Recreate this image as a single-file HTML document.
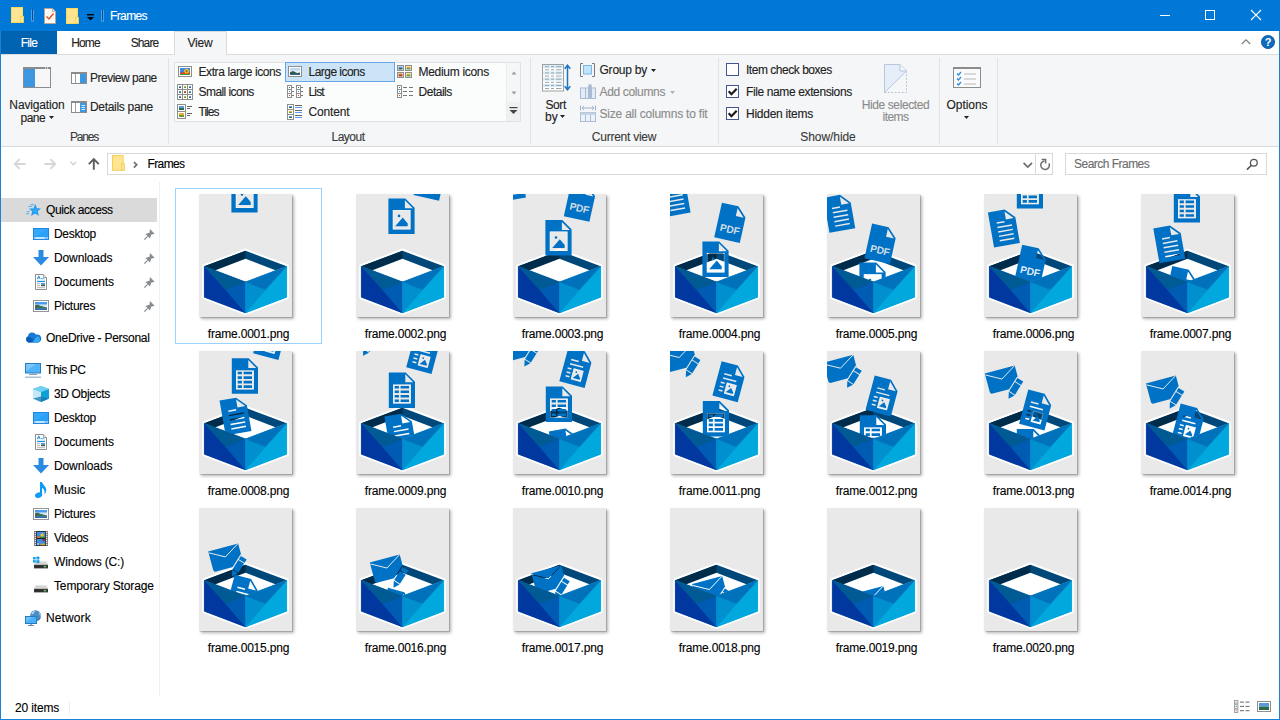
<!DOCTYPE html>
<html lang="en"><head><meta charset="utf-8"><title>Frames</title>
<style>
*{box-sizing:border-box;margin:0;padding:0}
html,body{width:1280px;height:720px;overflow:hidden;background:#fff}
body{font-family:"Liberation Sans",sans-serif;font-size:12px;color:#000;position:relative}
.a{position:absolute}
.t{position:absolute;white-space:nowrap;line-height:16px;height:16px;font-size:12px;color:#000;-webkit-text-stroke:.12px}
.tc{transform:translateX(-50%)}
.g{color:#8b8b8b}
.w{color:#fff}
svg{position:absolute;overflow:visible}
.lbl{color:#3a3a3a}
</style></head>
<body>
<div class="a" style="left:0px;top:55px;width:1280px;height:92px;background:#f5f6f7;"></div>
<div class="a" style="left:0px;top:0px;width:1280px;height:31px;background:#0078d7;"></div><svg style="left:11px;top:7px" width="13" height="16" viewBox="0 0 13 16"><rect x="0.5" y="0.5" width="11" height="15" fill="#ffe591" stroke="#fbd75c"/><rect x="9.8" y="9.4" width="2.7" height="6.1" fill="#ffeaa6" stroke="#f6cf50" stroke-width="0.9"/></svg><svg style="left:31px;top:9px" width="3" height="13" viewBox="0 0 3 13"><rect x="0" y="0.3" width="3" height="12.7" rx="1.2" fill="#4a9fe6"/><rect x="1" y="0" width="1" height="11.6" fill="#0b4d90"/></svg><svg style="left:44px;top:8px" width="12" height="16" viewBox="0 0 12 16"><path d="M0.5 0.5H8.5L11.5 3.5V15.5H0.5Z" fill="#fafafa" stroke="#b9a392" stroke-width="1"/><path d="M8.5 0.5V3.5H11.5" fill="#e4e4e4" stroke="#b9a392" stroke-width="0.8"/><path d="M2.5 8.5L5 11L9.5 5.5" fill="none" stroke="#e8541e" stroke-width="1.5"/></svg><svg style="left:66px;top:8px" width="13" height="16" viewBox="0 0 13 16"><rect x="0.5" y="0.5" width="11" height="15" fill="#ffe591" stroke="#fbd75c"/><rect x="9.8" y="9.4" width="2.7" height="6.1" fill="#ffeaa6" stroke="#f6cf50" stroke-width="0.9"/></svg><svg style="left:87px;top:14px" width="8" height="7" viewBox="0 0 8 7"><rect x="0" y="0" width="7" height="1.4" fill="#000"/><path d="M0 3H7L3.5 6.6Z" fill="#000"/></svg><svg style="left:101px;top:9px" width="3" height="13" viewBox="0 0 3 13"><rect x="0" y="0.3" width="3" height="12.7" rx="1.2" fill="#4a9fe6"/><rect x="1" y="0" width="1" height="11.6" fill="#0b4d90"/></svg><div class="t w" style="left:110px;top:8px;letter-spacing:-0.614px;">Frames</div><div class="a" style="left:1160px;top:15px;width:10px;height:1px;background:#fff;"></div><div class="a" style="left:1205px;top:10px;width:10px;height:10px;border:1px solid #fff;"></div><svg style="left:1251px;top:10px" width="10" height="10" viewBox="0 0 10 10"><path d="M0 0L10 10M10 0L0 10" stroke="#fff" stroke-width="1.1" fill="none"/></svg>
<div class="a" style="left:0px;top:31px;width:1280px;height:24px;background:#fff;"></div><div class="a" style="left:0px;top:54px;width:1280px;height:1px;background:#dadbdc;"></div><div class="a" style="left:1px;top:31px;width:56px;height:23px;background:#0063b1;"></div><div class="t tc w" style="left:29px;top:35px;letter-spacing:-0.648px;">File</div><div class="t tc " style="left:85.5px;top:35px;letter-spacing:-0.855px;color:#222;">Home</div><div class="t tc " style="left:144.5px;top:35px;letter-spacing:-0.883px;color:#222;">Share</div><div class="a" style="left:174px;top:31px;width:53px;height:24px;background:#f5f6f7;border:1px solid #dadbdc;border-bottom:none"></div><div class="t tc " style="left:200px;top:35px;letter-spacing:-0.199px;color:#222;">View</div><svg style="left:1241px;top:38px" width="10" height="7" viewBox="0 0 10 7"><path d="M0.8 6L5 1.8L9.2 6" stroke="#7a7a7a" stroke-width="1.1" fill="none"/></svg><svg style="left:1261px;top:35px" width="14" height="14" viewBox="0 0 14 14"><circle cx="7" cy="7" r="6.6" fill="#0f6cbd" stroke="#0a559c" stroke-width=".8"/><text x="7" y="11" font-size="11" font-weight="bold" fill="#fff" text-anchor="middle" font-family="Liberation Sans, sans-serif">?</text></svg>
<svg style="left:23px;top:67px" width="28" height="21" viewBox="0 0 28 21"><rect x="0.5" y="1" width="27" height="19.5" fill="#f7f7f7" stroke="#8c8c8c" stroke-width="1"/><rect x="0" y="0" width="28" height="2" fill="#8c8c8c"/><rect x="1" y="2" width="11" height="18" fill="#3c96e0"/><rect x="22" y="0.5" width="1" height="1" fill="#fff"/><rect x="24" y="0.5" width="1" height="1" fill="#fff"/></svg><div class="t tc " style="left:37px;top:96.5px;letter-spacing:-0.145px;color:#222;">Navigation</div><div class="t " style="left:20.5px;top:109.5px;letter-spacing:-0.501px;color:#222;">pane</div><svg style="left:49px;top:116px" width="6" height="4" viewBox="0 0 6 4"><path d="M0 0H5L2.5 3Z" fill="#222"/></svg><svg style="left:71px;top:72px" width="16" height="12" viewBox="0 0 16 12"><rect x="0.5" y="1" width="15" height="10.5" fill="#fff" stroke="#8c8c8c"/><rect x="0" y="0" width="16" height="2" fill="#8c8c8c"/><rect x="4" y="2" width="1" height="9" fill="#a0a0a0"/><rect x="9" y="2" width="6" height="9" fill="#3c96e0"/></svg><div class="t " style="left:90px;top:70px;letter-spacing:-0.493px;color:#222;">Preview pane</div><svg style="left:71px;top:101px" width="16" height="12" viewBox="0 0 16 12"><rect x="0.5" y="1" width="15" height="10.5" fill="#fff" stroke="#8c8c8c"/><rect x="0" y="0" width="16" height="2" fill="#8c8c8c"/><rect x="4" y="2" width="1" height="9" fill="#a0a0a0"/><rect x="9" y="2" width="6" height="9" fill="#3c96e0"/><rect x="10.5" y="4" width="3.5" height="1" fill="#dbeeff"/><rect x="10.5" y="6" width="3.5" height="1" fill="#dbeeff"/><rect x="10.5" y="8" width="3.5" height="1" fill="#dbeeff"/></svg><div class="t " style="left:90px;top:99px;letter-spacing:-0.311px;color:#222;">Details pane</div><div class="t tc lbl" style="left:84px;top:129px;letter-spacing:-1.208px;">Panes</div><div class="a" style="left:168px;top:58px;width:1px;height:86px;background:#e2e3e4;"></div>
<div class="a" style="left:174px;top:62px;width:347px;height:60px;background:#fbfcfc;border:1px solid #e1e2e3;"></div><div class="a" style="left:506px;top:63px;width:14px;height:58px;background:#f5f6f7;border-left:1px solid #eceded"></div><div class="a" style="left:507px;top:102px;width:13px;height:19px;background:#eff0f1;"></div><svg style="left:511px;top:70.5px" width="6" height="4" viewBox="0 0 6 4"><path d="M0.5 3.6L3 0.6L5.5 3.6Z" fill="#8fa0ad"/></svg><svg style="left:511px;top:91px" width="6" height="4" viewBox="0 0 6 4"><path d="M0.5 0.4L3 3.4L5.5 0.4Z" fill="#8fa0ad"/></svg><svg style="left:509px;top:107px" width="9" height="8" viewBox="0 0 9 8"><rect x="0.5" y="0" width="8" height="1.2" fill="#444"/><path d="M0.5 3H8.5L4.5 7Z" fill="#444"/></svg><div class="a" style="left:285px;top:62px;width:110px;height:20px;background:#cce4f7;border:1px solid #66a7e8;"></div><svg style="left:178px;top:66px" width="14" height="11" viewBox="0 0 14 11"><rect x="0.5" y="0.5" width="13" height="10" fill="#fff" stroke="#8e8e8e"/><rect x="2" y="2" width="10" height="4" fill="#3d8be6"/><rect x="2" y="6" width="10" height="2" fill="#e04a20"/><rect x="2" y="8" width="10" height="1" fill="#3a9a3a"/><circle cx="8.6" cy="5.2" r="2.4" fill="#f2c028"/><circle cx="8.6" cy="5.2" r="1" fill="#8a5a18"/><rect x="3" y="5" width="2" height="2" fill="#4a6ae0"/></svg><div class="t " style="left:198.5px;top:64px;letter-spacing:-0.411px;color:#222;">Extra large icons</div><svg style="left:288px;top:66px" width="14" height="11" viewBox="0 0 14 11"><rect x="0.5" y="0.5" width="13" height="10" fill="#fff" stroke="#8e8e8e"/><rect x="2" y="2" width="10" height="3" fill="#bcd8f0"/><rect x="2" y="4.5" width="10" height="2" fill="#e6eef4"/><path d="M2 9V6.2L5 5L9 7L12 6.4V9Z" fill="#2d5a50"/><rect x="2" y="8" width="10" height="1" fill="#3a6a8a"/></svg><div class="t " style="left:308.5px;top:64px;letter-spacing:-0.535px;color:#222;">Large icons</div><svg style="left:397px;top:65px" width="15" height="13" viewBox="0 0 15 13"><rect x="0.5" y="0.5" width="6" height="5" fill="#fff" stroke="#8e8e8e"/><rect x="1.5" y="1.5" width="4" height="1.5" fill="#5a9ce8"/><rect x="1.5" y="3.0" width="4" height="1.5" fill="#2e6a52"/><rect x="8.5" y="0.5" width="6" height="5" fill="#fff" stroke="#8e8e8e"/><rect x="9.5" y="1.5" width="4" height="1.5" fill="#e8b030"/><rect x="9.5" y="3.0" width="4" height="1.5" fill="#6a9a40"/><rect x="0.5" y="7.5" width="6" height="5" fill="#fff" stroke="#8e8e8e"/><rect x="1.5" y="8.5" width="4" height="1.5" fill="#d06a20"/><rect x="1.5" y="10.0" width="4" height="1.5" fill="#b04818"/><rect x="8.5" y="7.5" width="6" height="5" fill="#fff" stroke="#8e8e8e"/><rect x="9.5" y="8.5" width="4" height="1.5" fill="#e8b030"/><rect x="9.5" y="10.0" width="4" height="1.5" fill="#6a9a40"/></svg><div class="t " style="left:418.5px;top:64px;letter-spacing:-0.303px;color:#222;">Medium icons</div><svg style="left:177px;top:84px" width="16" height="16" viewBox="0 0 16 16"><rect x="0.5" y="0.5" width="5" height="5" fill="#fff" stroke="#8e8e8e"/><rect x="2" y="2" width="2" height="1.0" fill="#5a9ce8"/><rect x="2" y="3.0" width="2" height="1.0" fill="#2e6a52"/><rect x="5.5" y="0.5" width="5" height="5" fill="#fff" stroke="#8e8e8e"/><rect x="7" y="2" width="2" height="1.0" fill="#e8b030"/><rect x="7" y="3.0" width="2" height="1.0" fill="#6a9a40"/><rect x="10.5" y="0.5" width="5" height="5" fill="#fff" stroke="#8e8e8e"/><rect x="12" y="2" width="2" height="1.0" fill="#5a9ce8"/><rect x="12" y="3.0" width="2" height="1.0" fill="#3a7a5a"/><rect x="0.5" y="5.5" width="5" height="5" fill="#fff" stroke="#8e8e8e"/><rect x="2" y="7" width="2" height="1.0" fill="#5a9ce8"/><rect x="2" y="8.0" width="2" height="1.0" fill="#3a7a5a"/><rect x="5.5" y="5.5" width="5" height="5" fill="#fff" stroke="#8e8e8e"/><rect x="7" y="7" width="2" height="1.0" fill="#d06a20"/><rect x="7" y="8.0" width="2" height="1.0" fill="#b04818"/><rect x="10.5" y="5.5" width="5" height="5" fill="#fff" stroke="#8e8e8e"/><rect x="12" y="7" width="2" height="1.0" fill="#5a9ce8"/><rect x="12" y="8.0" width="2" height="1.0" fill="#2e6a52"/><rect x="0.5" y="10.5" width="5" height="5" fill="#fff" stroke="#8e8e8e"/><rect x="2" y="12" width="2" height="1.0" fill="#5a9ce8"/><rect x="2" y="13.0" width="2" height="1.0" fill="#2e6a52"/><rect x="5.5" y="10.5" width="5" height="5" fill="#fff" stroke="#8e8e8e"/><rect x="7" y="12" width="2" height="1.0" fill="#e8b030"/><rect x="7" y="13.0" width="2" height="1.0" fill="#6a9a40"/><rect x="10.5" y="10.5" width="5" height="5" fill="#fff" stroke="#8e8e8e"/><rect x="12" y="12" width="2" height="1.0" fill="#5a9ce8"/><rect x="12" y="13.0" width="2" height="1.0" fill="#3a7a5a"/></svg><div class="t " style="left:198.5px;top:84px;letter-spacing:-0.556px;color:#222;">Small icons</div><svg style="left:287px;top:85px" width="16" height="13" viewBox="0 0 16 13"><rect x="0.5" y="0.5" width="4" height="4" fill="#fff" stroke="#8e8e8e"/><rect x="0.5" y="4.5" width="4" height="4" fill="#fff" stroke="#8e8e8e"/><rect x="0.5" y="8.5" width="4" height="4" fill="#fff" stroke="#8e8e8e"/><rect x="2" y="2" width="1" height="1" fill="#3a7a5a"/><rect x="5" y="2" width="2" height="1" fill="#777"/><rect x="2" y="6" width="1" height="1" fill="#4a8cf0"/><rect x="5" y="6" width="2" height="1" fill="#777"/><rect x="2" y="10" width="1" height="1" fill="#e05020"/><rect x="5" y="10" width="2" height="1" fill="#777"/><rect x="9.5" y="0.5" width="4" height="4" fill="#fff" stroke="#8e8e8e"/><rect x="9.5" y="4.5" width="4" height="4" fill="#fff" stroke="#8e8e8e"/><rect x="9.5" y="8.5" width="4" height="4" fill="#fff" stroke="#8e8e8e"/><rect x="11" y="2" width="1" height="1" fill="#3a7a5a"/><rect x="14" y="2" width="2" height="1" fill="#777"/><rect x="11" y="6" width="1" height="1" fill="#4a8cf0"/><rect x="14" y="6" width="2" height="1" fill="#777"/><rect x="11" y="10" width="1" height="1" fill="#e05020"/><rect x="14" y="10" width="2" height="1" fill="#777"/></svg><div class="t " style="left:308.5px;top:84px;letter-spacing:-0.829px;color:#222;">List</div><svg style="left:397px;top:85px" width="16" height="13" viewBox="0 0 16 13"><rect x="0.5" y="0.5" width="4" height="4" fill="#fff" stroke="#8e8e8e"/><rect x="0.5" y="4.5" width="4" height="4" fill="#fff" stroke="#8e8e8e"/><rect x="0.5" y="8.5" width="4" height="4" fill="#fff" stroke="#8e8e8e"/><rect x="2" y="2" width="1" height="1" fill="#3a7a5a"/><rect x="6" y="2" width="4" height="1" fill="#777"/><rect x="12" y="2" width="4" height="1" fill="#777"/><rect x="2" y="6" width="1" height="1" fill="#4a8cf0"/><rect x="6" y="6" width="4" height="1" fill="#777"/><rect x="12" y="6" width="4" height="1" fill="#777"/><rect x="2" y="10" width="1" height="1" fill="#e05020"/><rect x="6" y="10" width="4" height="1" fill="#777"/><rect x="12" y="10" width="4" height="1" fill="#777"/></svg><div class="t " style="left:418.5px;top:84px;letter-spacing:-0.481px;color:#222;">Details</div><svg style="left:177px;top:104px" width="16" height="15" viewBox="0 0 16 15"><rect x="0.5" y="0.5" width="8" height="7" fill="#fff" stroke="#8e8e8e"/><rect x="0.5" y="7.5" width="8" height="7" fill="#fff" stroke="#8e8e8e"/><rect x="2" y="2" width="5" height="2.0" fill="#5a9ce8"/><rect x="2" y="4.0" width="5" height="2.0" fill="#2e6a52"/><rect x="2" y="9" width="5" height="2.0" fill="#e8b030"/><rect x="2" y="11.0" width="5" height="2.0" fill="#6a9a40"/><rect x="10" y="2" width="5" height="1" fill="#666"/><rect x="10" y="4" width="3" height="1" fill="#666"/><rect x="10" y="9" width="5" height="1" fill="#666"/><rect x="10" y="11" width="3" height="1" fill="#666"/></svg><div class="t " style="left:198.5px;top:104px;letter-spacing:-0.998px;color:#222;">Tiles</div><svg style="left:287px;top:104px" width="16" height="16" viewBox="0 0 16 16"><rect x="0.5" y="0.5" width="6" height="5" fill="#fff" stroke="#8e8e8e"/><rect x="0.5" y="5.5" width="6" height="5" fill="#fff" stroke="#8e8e8e"/><rect x="0.5" y="10.5" width="6" height="5" fill="#fff" stroke="#8e8e8e"/><rect x="2" y="2" width="3" height="1.0" fill="#5a9ce8"/><rect x="2" y="3.0" width="3" height="1.0" fill="#2e6a52"/><rect x="8" y="1" width="7" height="1" fill="#666"/><rect x="8" y="3" width="7" height="1" fill="#5a9cf8"/><rect x="2" y="7" width="3" height="1.0" fill="#e8b030"/><rect x="2" y="8.0" width="3" height="1.0" fill="#6a9a40"/><rect x="8" y="6" width="7" height="1" fill="#666"/><rect x="8" y="8" width="7" height="1" fill="#5a9cf8"/><rect x="2" y="12" width="3" height="1.0" fill="#5a9ce8"/><rect x="2" y="13.0" width="3" height="1.0" fill="#3a7a5a"/><rect x="8" y="11" width="7" height="1" fill="#666"/><rect x="8" y="13" width="7" height="1" fill="#5a9cf8"/></svg><div class="t " style="left:308.5px;top:104px;letter-spacing:-0.172px;color:#222;">Content</div><div class="t tc lbl" style="left:348px;top:129px;letter-spacing:-0.486px;">Layout</div><div class="a" style="left:530px;top:58px;width:1px;height:86px;background:#e2e3e4;"></div>
<svg style="left:542px;top:64px" width="29" height="27" viewBox="0 0 29 27"><rect x="0.5" y="0.5" width="21" height="26.5" fill="#fff" stroke="#a0a0a0"/><rect x="1" y="1.1" width="20" height="3.1" fill="#d3edf9"/><rect x="3" y="2.2" width="4" height="1" fill="#a2a2a2"/><rect x="9" y="2.2" width="3" height="1" fill="#a2a2a2"/><rect x="14" y="2.2" width="5.5" height="1" fill="#a2a2a2"/><rect x="3" y="5.32" width="4" height="1" fill="#a2a2a2"/><rect x="9" y="5.32" width="3" height="1" fill="#a2a2a2"/><rect x="14" y="5.32" width="5.5" height="1" fill="#a2a2a2"/><rect x="1" y="7.34" width="20" height="3.1" fill="#d3edf9"/><rect x="3" y="8.44" width="4" height="1" fill="#a2a2a2"/><rect x="9" y="8.44" width="3" height="1" fill="#a2a2a2"/><rect x="14" y="8.44" width="5.5" height="1" fill="#a2a2a2"/><rect x="3" y="11.559999999999999" width="4" height="1" fill="#a2a2a2"/><rect x="9" y="11.559999999999999" width="3" height="1" fill="#a2a2a2"/><rect x="14" y="11.559999999999999" width="5.5" height="1" fill="#a2a2a2"/><rect x="1" y="13.58" width="20" height="3.1" fill="#d3edf9"/><rect x="3" y="14.68" width="4" height="1" fill="#a2a2a2"/><rect x="9" y="14.68" width="3" height="1" fill="#a2a2a2"/><rect x="14" y="14.68" width="5.5" height="1" fill="#a2a2a2"/><rect x="3" y="17.800000000000004" width="4" height="1" fill="#a2a2a2"/><rect x="9" y="17.800000000000004" width="3" height="1" fill="#a2a2a2"/><rect x="14" y="17.800000000000004" width="5.5" height="1" fill="#a2a2a2"/><rect x="1" y="19.82" width="20" height="3.1" fill="#d3edf9"/><rect x="3" y="20.92" width="4" height="1" fill="#a2a2a2"/><rect x="9" y="20.92" width="3" height="1" fill="#a2a2a2"/><rect x="14" y="20.92" width="5.5" height="1" fill="#a2a2a2"/><rect x="3" y="24.040000000000003" width="4" height="1" fill="#a2a2a2"/><rect x="9" y="24.040000000000003" width="3" height="1" fill="#a2a2a2"/><rect x="14" y="24.040000000000003" width="5.5" height="1" fill="#a2a2a2"/><path d="M25.5 1.5V25.5M22.7 4.8L25.5 1.2L28.3 4.8M22.7 22.2L25.5 25.8L28.3 22.2" stroke="#1e74c0" stroke-width="1.5" fill="none"/></svg><div class="t tc " style="left:555.7px;top:96.5px;letter-spacing:-0.439px;color:#222;">Sort</div><div class="t " style="left:545px;top:109px;letter-spacing:0.012px;color:#222;">by</div><svg style="left:560px;top:115px" width="6" height="4" viewBox="0 0 6 4"><path d="M0 0H5L2.5 3Z" fill="#222"/></svg><svg style="left:580px;top:63px" width="16" height="14" viewBox="0 0 16 14"><path d="M3 0.5H0.5V13.5H3M12 0.5H14.5V13.5H12" stroke="#7a7a7a" fill="none"/><rect x="3.5" y="2.5" width="8" height="8.5" fill="#bfe4fb" stroke="#7ab8e6"/></svg><div class="t " style="left:599.5px;top:62px;letter-spacing:-0.223px;color:#222;">Group by</div><svg style="left:651px;top:69px" width="6" height="4" viewBox="0 0 6 4"><path d="M0 0H5L2.5 3Z" fill="#222"/></svg><svg style="left:580px;top:84px" width="16" height="15" viewBox="0 0 16 15"><rect x="0.5" y="4" width="15" height="10.5" fill="#e3ecf6" stroke="#a9bcd4"/><rect x="5" y="4" width="1" height="10" fill="#a9bcd4"/><rect x="8" y="2" width="4" height="12.5" fill="#a9bcd4"/><path d="M8 0.5H12L10 2.5Z" fill="#8fa9c8"/></svg><div class="t g" style="left:599.5px;top:84px;letter-spacing:-0.347px;">Add columns</div><svg style="left:670px;top:91px" width="6" height="4" viewBox="0 0 6 4"><path d="M0 0H5L2.5 3Z" fill="#b0b0b0"/></svg><svg style="left:580px;top:105px" width="16" height="17" viewBox="0 0 16 17"><path d="M0.5 0.5V5.5M15.5 0.5V5.5M2 3H14M4 1L2 3L4 5M12 1L14 3L12 5" stroke="#9db2cc" fill="none" stroke-width="1"/><rect x="0.5" y="7.5" width="15" height="9" fill="#eef3f9" stroke="#a9bcd4"/><rect x="0.5" y="7.5" width="15" height="2.5" fill="#c5d3e4"/><rect x="5" y="10" width="1" height="6" fill="#a9bcd4"/><rect x="10" y="10" width="1" height="6" fill="#a9bcd4"/></svg><div class="t g" style="left:599.5px;top:106px;letter-spacing:-0.205px;">Size all columns to fit</div><div class="t tc lbl" style="left:624px;top:129px;letter-spacing:-0.251px;">Current view</div><div class="a" style="left:718px;top:58px;width:1px;height:86px;background:#e2e3e4;"></div>
<svg style="left:726px;top:63px" width="13" height="13" viewBox="0 0 13 13"><rect x="0.5" y="0.5" width="12" height="12" fill="#fff" stroke="#44558f"/></svg><div class="t " style="left:746px;top:62px;letter-spacing:-0.472px;color:#222;">Item check boxes</div><svg style="left:726px;top:85px" width="13" height="13" viewBox="0 0 13 13"><rect x="0.5" y="0.5" width="12" height="12" fill="#fff" stroke="#44558f"/><path d="M2.7 6.3L5.4 9.2L10.7 3.7" stroke="#1a1a1a" stroke-width="2.2" fill="none"/></svg><div class="t " style="left:746px;top:84px;letter-spacing:-0.378px;color:#222;">File name extensions</div><svg style="left:726px;top:107px" width="13" height="13" viewBox="0 0 13 13"><rect x="0.5" y="0.5" width="12" height="12" fill="#fff" stroke="#44558f"/><path d="M2.7 6.3L5.4 9.2L10.7 3.7" stroke="#1a1a1a" stroke-width="2.2" fill="none"/></svg><div class="t " style="left:746px;top:106px;letter-spacing:-0.257px;color:#222;">Hidden items</div><svg style="left:884px;top:64px" width="24" height="29" viewBox="0 0 24 29"><path d="M0.5 0.5H16L22.5 7V28.5H0.5Z" fill="none" stroke="#b7c7dc" stroke-dasharray="2 1.5"/><path d="M0.5 0.5H16L22.5 7L0.5 28.5Z" fill="#e6eef9" stroke="#b7c7dc"/><path d="M16 0.5V7H22.5" fill="#f4f7fb" stroke="#b7c7dc"/></svg><div class="t tc g" style="left:895.5px;top:96.5px;letter-spacing:-0.402px;">Hide selected</div><div class="t tc g" style="left:895.5px;top:109px;letter-spacing:-0.543px;">items</div><div class="t tc lbl" style="left:828px;top:129px;letter-spacing:-0.068px;">Show/hide</div><div class="a" style="left:939px;top:58px;width:1px;height:86px;background:#e2e3e4;"></div><svg style="left:953px;top:67px" width="28" height="21" viewBox="0 0 28 21"><rect x="0.5" y="1" width="27" height="19.5" fill="#fafafa" stroke="#8c8c8c"/><rect x="0" y="0" width="28" height="2" fill="#8c8c8c"/><path d="M4 6.5L5.5 8L8 5" stroke="#2a8ae0" stroke-width="1.2" fill="none"/><rect x="11" y="6.5" width="12" height="1" fill="#b8b8b8"/><path d="M4 11.5L5.5 13L8 10" stroke="#2a8ae0" stroke-width="1.2" fill="none"/><rect x="11" y="11.5" width="12" height="1" fill="#b8b8b8"/><path d="M4 16.5L5.5 18L8 15" stroke="#2a8ae0" stroke-width="1.2" fill="none"/><rect x="11" y="16.5" width="12" height="1" fill="#b8b8b8"/></svg><div class="t tc " style="left:967px;top:96.5px;letter-spacing:-0.06px;color:#222;">Options</div><svg style="left:964px;top:116px" width="6" height="4" viewBox="0 0 6 4"><path d="M0 0H5L2.5 3Z" fill="#222"/></svg><div class="a" style="left:997px;top:58px;width:1px;height:86px;background:#e2e3e4;"></div>
<div class="a" style="left:0px;top:146px;width:1280px;height:1px;background:#dadbdc;"></div><svg style="left:14px;top:158px" width="12" height="12" viewBox="0 0 12 12"><path d="M11.5 6H1M5.6 1.2L0.8 6L5.6 10.8" stroke="#d6d6d6" stroke-width="1.9" fill="none"/></svg><svg style="left:44px;top:158px" width="12" height="12" viewBox="0 0 12 12"><path d="M0.5 6H11M6.4 1.2L11.2 6L6.4 10.8" stroke="#d6d6d6" stroke-width="1.9" fill="none"/></svg><svg style="left:70px;top:161px" width="7" height="5" viewBox="0 0 7 5"><path d="M0.5 0.8L3.3 3.6L6.1 0.8" stroke="#c4c4c4" stroke-width="1.1" fill="none"/></svg><svg style="left:88px;top:158px" width="12" height="12" viewBox="0 0 12 12"><path d="M5.8 11.8V1.4M0.8 6.2L5.8 1.2L10.8 6.2" stroke="#5e5e5e" stroke-width="1.9" fill="none"/></svg><div class="a" style="left:107px;top:153px;width:946px;height:22px;background:#fff;border:1px solid #d9d9d9;"></div><svg style="left:112px;top:155px" width="13" height="16" viewBox="0 0 13 16"><rect x="0.5" y="0.5" width="10.6" height="14.8" fill="#ffe591" stroke="#f5cf56"/><rect x="9.9" y="8.8" width="2.4" height="6.5" fill="#ffeaa6" stroke="#efc648" stroke-width="0.9"/></svg><svg style="left:133px;top:161px" width="5" height="8" viewBox="0 0 5 8"><path d="M0.9 1L3.7 3.8L0.9 6.6" stroke="#6e6e6e" stroke-width="1.7" fill="none"/></svg><div class="t " style="left:147.5px;top:156px;letter-spacing:-0.614px;">Frames</div><svg style="left:1023px;top:162px" width="10" height="7" viewBox="0 0 10 7"><path d="M0.6 0.8L4.8 5L9 0.8" stroke="#6a6a6a" stroke-width="1.7" fill="none"/></svg><div class="a" style="left:1035px;top:154px;width:1px;height:20px;background:#d9d9d9;"></div><svg style="left:1039px;top:158px" width="12" height="13" viewBox="0 0 12 13"><path d="M10 5.4A4.3 4.3 0 1 1 5.4 2.9" stroke="#6e6e6e" stroke-width="1.5" fill="none"/><path d="M2.6 1.6H6.6V5.4" stroke="#6e6e6e" stroke-width="1.5" fill="none"/></svg><div class="a" style="left:1065px;top:153px;width:202px;height:22px;background:#fff;border:1px solid #d9d9d9;"></div><div class="t " style="left:1074px;top:156px;letter-spacing:-0.523px;color:#6d6d6d">Search Frames</div><svg style="left:1246px;top:158px" width="13" height="13" viewBox="0 0 13 13"><circle cx="7.8" cy="4.8" r="3.4" stroke="#555" stroke-width="1.3" fill="none"/><path d="M5.4 7.2L1 11.6" stroke="#555" stroke-width="1.6"/></svg>
<div class="a" style="left:1px;top:198px;width:156px;height:24px;background:#dadada;"></div><div class="a" style="left:159px;top:182px;width:1px;height:514px;background:#f0f0f0;"></div><svg style="left:26px;top:203.8px" width="15" height="13" viewBox="0 0 15 13"><path d="M9.3 0L10.9 4.2L15 4.5L11.7 7.3L12.9 11.8L9.1 9.4L5 12L6.3 7.5L3 4.6L7.4 4.4Z" fill="#1e9af0"/><path d="M9.2 3L10 5.6L12.4 5.8L10.4 7.4L11 9.6L9.1 8.2L7 9.6L7.8 7.4L6 5.8L8.4 5.7Z" fill="#34aaf8"/><path d="M4.5 0.8L8 0.4M2.5 2.6L6.4 2.2M0.6 7.8L3.6 7.4M0 9.8L3.2 9.6" stroke="#2a9ef2" stroke-width="0.9" stroke-opacity=".8"/></svg><div class="t " style="left:46px;top:202px;letter-spacing:-0.387px;">Quick access</div><svg style="left:33px;top:228px" width="16" height="12" viewBox="0 0 16 12"><rect x="0" y="0" width="16" height="12" fill="#2aa0f6"/><rect x="0.5" y="0.5" width="15" height="11" fill="none" stroke="#1c86e0"/><path d="M1 1H15L1 9Z" fill="#36a8fa"/><rect x="1" y="9.5" width="14" height="1" fill="#e8f4ff"/><rect x="2.5" y="9.5" width="9.5" height="1" fill="#fff"/><rect x="12" y="9.5" width="1" height="1" fill="#2aa0f6"/></svg><div class="t " style="left:54px;top:226px;letter-spacing:-0.305px;">Desktop</div><svg style="left:144px;top:229px" width="11" height="11" viewBox="0 0 11 11"><path d="M6.2 0.3L10.6 4.7L9.4 5.3L7.6 5.2L6.4 7.8L6 9.6L1.4 5L3.2 4.6L5.8 3.4L5.6 1.4Z" fill="#858b90"/><path d="M3.6 7.4L0.4 10.6" stroke="#858b90" stroke-width="1.2"/></svg><svg style="left:33px;top:250px" width="16" height="16" viewBox="0 0 16 16"><path d="M5.5 0H10.5V7H16L8 15.5L0 7H5.5Z" fill="#2b8be0"/></svg><div class="t " style="left:54px;top:250px;letter-spacing:-0.109px;">Downloads</div><svg style="left:144px;top:253px" width="11" height="11" viewBox="0 0 11 11"><path d="M6.2 0.3L10.6 4.7L9.4 5.3L7.6 5.2L6.4 7.8L6 9.6L1.4 5L3.2 4.6L5.8 3.4L5.6 1.4Z" fill="#858b90"/><path d="M3.6 7.4L0.4 10.6" stroke="#858b90" stroke-width="1.2"/></svg><svg style="left:35px;top:274px" width="12" height="16" viewBox="0 0 12 16"><path d="M0.5 0.5H8.5L11.5 3.5V15.5H0.5Z" fill="#fff" stroke="#8e8e8e"/><path d="M8.5 0.5V3.5H11.5" fill="#f0f0f0" stroke="#8e8e8e" stroke-width=".8"/><path d="M2.2 5.2L3.8 1.8L5.2 5.2M2.8 4H4.6" stroke="#1e90e0" stroke-width="0.9" fill="none"/><rect x="6" y="4.2" width="3.5" height="1" fill="#49a8ea"/><rect x="2" y="6.8" width="8" height="1.3" fill="#1e90e0"/><rect x="2" y="9.2" width="3" height="1" fill="#b4b4b4"/><rect x="2" y="11.2" width="3" height="1" fill="#b4b4b4"/><rect x="2" y="13.2" width="8" height="1" fill="#b4b4b4"/><rect x="6" y="9" width="4" height="1.6" fill="#4a9cf0"/><rect x="6" y="10.6" width="4" height="1.6" fill="#33604c"/></svg><div class="t " style="left:54px;top:274px;letter-spacing:-0.075px;">Documents</div><svg style="left:144px;top:277px" width="11" height="11" viewBox="0 0 11 11"><path d="M6.2 0.3L10.6 4.7L9.4 5.3L7.6 5.2L6.4 7.8L6 9.6L1.4 5L3.2 4.6L5.8 3.4L5.6 1.4Z" fill="#858b90"/><path d="M3.6 7.4L0.4 10.6" stroke="#858b90" stroke-width="1.2"/></svg><svg style="left:33px;top:300px" width="16" height="12" viewBox="0 0 16 12"><rect x="0.5" y="0.5" width="15" height="11" fill="#fff" stroke="#949494"/><rect x="2" y="2" width="12" height="3" fill="#4a9cf0"/><rect x="2" y="4.4" width="12" height="2.2" fill="#cfe3f2"/><path d="M2 8.4V5.2L4.5 4.4L8 6L12 7L14 7.4V8.4Z" fill="#3a6e54"/><rect x="2" y="8.2" width="12" height="1.8" fill="#2f6aa8"/></svg><div class="t " style="left:54px;top:298px;letter-spacing:-0.266px;">Pictures</div><svg style="left:144px;top:301px" width="11" height="11" viewBox="0 0 11 11"><path d="M6.2 0.3L10.6 4.7L9.4 5.3L7.6 5.2L6.4 7.8L6 9.6L1.4 5L3.2 4.6L5.8 3.4L5.6 1.4Z" fill="#858b90"/><path d="M3.6 7.4L0.4 10.6" stroke="#858b90" stroke-width="1.2"/></svg><svg style="left:25px;top:332px" width="16" height="11" viewBox="0 0 16 11"><path d="M3.5 10.5A3.3 3.3 0 0 1 3 4.2A4.2 4.2 0 0 1 10.8 2.6A3.6 3.6 0 0 1 13.4 10.5Z" fill="#1478d4"/><path d="M3.5 10.5A3.3 3.3 0 0 1 3 4.6L13.8 10.3Z" fill="#0a5cb8"/><path d="M7 10.5L12 4.2A3.4 3.4 0 0 1 13.4 10.5Z" fill="#34a8f4"/></svg><div class="t " style="left:46px;top:330px;letter-spacing:-0.268px;">OneDrive - Personal</div><svg style="left:25px;top:363.0px" width="16" height="15" viewBox="0 0 16 15"><rect x="0.5" y="0.5" width="15" height="9.5" fill="#52b4fc" stroke="#2a7cc0"/><path d="M1 1H11L1 8Z" fill="#7cc6fc"/><rect x="4" y="11" width="8" height="1" fill="#8aa0b4"/><rect x="7" y="10.4" width="2" height="0.8" fill="#8aa0b4"/><rect x="0" y="13.6" width="16" height="1.2" fill="#9ab2c8"/></svg><div class="t " style="left:46px;top:362px;letter-spacing:-0.448px;">This PC</div><svg style="left:33px;top:386px" width="16" height="16" viewBox="0 0 16 16"><path d="M8 0L16 3V12.5L8 16L0 12.5V3Z" fill="#38b8e0"/><path d="M0 3L8 6V16L0 12.5Z" fill="#c4e8f8"/><path d="M8 6L16 3V12.5L8 16Z" fill="#10a0d8"/><path d="M0 3L8 0L16 3L8 6Z" fill="#72d0f0"/><path d="M0 12.5L8 10.5L16 12.5L8 16Z" fill="#1c78b0" fill-opacity=".75"/></svg><div class="t " style="left:54px;top:386px;letter-spacing:-0.351px;">3D Objects</div><svg style="left:33px;top:412px" width="16" height="12" viewBox="0 0 16 12"><rect x="0" y="0" width="16" height="12" fill="#2aa0f6"/><rect x="0.5" y="0.5" width="15" height="11" fill="none" stroke="#1c86e0"/><path d="M1 1H15L1 9Z" fill="#36a8fa"/><rect x="1" y="9.5" width="14" height="1" fill="#e8f4ff"/><rect x="2.5" y="9.5" width="9.5" height="1" fill="#fff"/><rect x="12" y="9.5" width="1" height="1" fill="#2aa0f6"/></svg><div class="t " style="left:54px;top:410px;letter-spacing:-0.305px;">Desktop</div><svg style="left:35px;top:434px" width="12" height="16" viewBox="0 0 12 16"><path d="M0.5 0.5H8.5L11.5 3.5V15.5H0.5Z" fill="#fff" stroke="#8e8e8e"/><path d="M8.5 0.5V3.5H11.5" fill="#f0f0f0" stroke="#8e8e8e" stroke-width=".8"/><path d="M2.2 5.2L3.8 1.8L5.2 5.2M2.8 4H4.6" stroke="#1e90e0" stroke-width="0.9" fill="none"/><rect x="6" y="4.2" width="3.5" height="1" fill="#49a8ea"/><rect x="2" y="6.8" width="8" height="1.3" fill="#1e90e0"/><rect x="2" y="9.2" width="3" height="1" fill="#b4b4b4"/><rect x="2" y="11.2" width="3" height="1" fill="#b4b4b4"/><rect x="2" y="13.2" width="8" height="1" fill="#b4b4b4"/><rect x="6" y="9" width="4" height="1.6" fill="#4a9cf0"/><rect x="6" y="10.6" width="4" height="1.6" fill="#33604c"/></svg><div class="t " style="left:54px;top:434px;letter-spacing:-0.075px;">Documents</div><svg style="left:33px;top:458px" width="16" height="16" viewBox="0 0 16 16"><path d="M5.5 0H10.5V7H16L8 15.5L0 7H5.5Z" fill="#2b8be0"/></svg><div class="t " style="left:54px;top:458px;letter-spacing:-0.109px;">Downloads</div><svg style="left:35px;top:482px" width="12" height="16" viewBox="0 0 12 16"><path d="M5 0H7C7.6 3 11.9 4.6 11.2 9C10.9 10.6 10.2 11.6 9.4 12.2C10.2 8.6 8.6 6.6 7 5.9V13.4H5Z" fill="#0a9cf8"/><ellipse cx="3.6" cy="13.2" rx="3.7" ry="2.6" transform="rotate(-18 3.6 13.2)" fill="#0a9cf8"/></svg><div class="t " style="left:54px;top:482px;letter-spacing:-0.011px;">Music</div><svg style="left:33px;top:508px" width="16" height="12" viewBox="0 0 16 12"><rect x="0.5" y="0.5" width="15" height="11" fill="#fff" stroke="#949494"/><rect x="2" y="2" width="12" height="3" fill="#4a9cf0"/><rect x="2" y="4.4" width="12" height="2.2" fill="#cfe3f2"/><path d="M2 8.4V5.2L4.5 4.4L8 6L12 7L14 7.4V8.4Z" fill="#3a6e54"/><rect x="2" y="8.2" width="12" height="1.8" fill="#2f6aa8"/></svg><div class="t " style="left:54px;top:506px;letter-spacing:-0.266px;">Pictures</div><svg style="left:34px;top:531px" width="14" height="15" viewBox="0 0 14 15"><rect x="0" y="0" width="14" height="15" fill="#6e6e6e"/><rect x="2.4" y="0" width="9.2" height="15" fill="#222"/><rect x="0.7" y="0.8" width="1.1" height="1.2" fill="#fff"/><rect x="12.2" y="0.8" width="1.1" height="1.2" fill="#fff"/><rect x="0.7" y="2.8" width="1.1" height="1.2" fill="#fff"/><rect x="12.2" y="2.8" width="1.1" height="1.2" fill="#fff"/><rect x="0.7" y="4.8" width="1.1" height="1.2" fill="#fff"/><rect x="12.2" y="4.8" width="1.1" height="1.2" fill="#fff"/><rect x="0.7" y="6.8" width="1.1" height="1.2" fill="#fff"/><rect x="12.2" y="6.8" width="1.1" height="1.2" fill="#fff"/><rect x="0.7" y="8.8" width="1.1" height="1.2" fill="#fff"/><rect x="12.2" y="8.8" width="1.1" height="1.2" fill="#fff"/><rect x="0.7" y="10.8" width="1.1" height="1.2" fill="#fff"/><rect x="12.2" y="10.8" width="1.1" height="1.2" fill="#fff"/><rect x="0.7" y="12.8" width="1.1" height="1.2" fill="#fff"/><rect x="12.2" y="12.8" width="1.1" height="1.2" fill="#fff"/><rect x="3" y="0.8" width="8" height="6.2" fill="#3a8ee8"/><rect x="3" y="8" width="8" height="6.2" fill="#3a8ee8"/><rect x="3" y="5.4" width="3" height="1.6" fill="#e86a20"/><rect x="6" y="5.8" width="5" height="1.2" fill="#2e8a2e"/><circle cx="8.2" cy="4" r="1.7" fill="#e8c820"/><rect x="6.5" y="12.6" width="4.5" height="1.6" fill="#e0a020"/><rect x="3" y="12.4" width="2" height="1.2" fill="#c8d8f0"/><path d="M7.5 8H11V10L9.5 10.8Z" fill="#7a3a6a"/></svg><div class="t " style="left:54px;top:530px;letter-spacing:-0.397px;">Videos</div><svg style="left:34.3px;top:561px" width="14" height="7.4" viewBox="0 0 14 7.4"><path d="M2 0H12L14 3.8H0Z" fill="#d2d2d2"/><path d="M2 0H12L12.6 1.2H1.4Z" fill="#e4e4e4"/><rect x="0" y="3.8" width="14" height="3.6" fill="#3a3a3a"/><rect x="0.8" y="4.6" width="8" height="2" fill="#2c2c2c"/><rect x="10" y="4.9" width="1.8" height="1.5" fill="#48e048"/></svg><svg style="left:33px;top:556.5px" width="7" height="6" viewBox="0 0 7 6"><rect x="0" y="0" width="2.7" height="2.5" fill="#1aa0e8"/><rect x="3.4" y="-0.4" width="3" height="2.9" fill="#1aa0e8"/><rect x="0" y="3.1" width="2.7" height="2.5" fill="#1aa0e8"/><rect x="3.4" y="3.1" width="3" height="2.9" fill="#1aa0e8"/></svg><div class="t " style="left:54px;top:554px;letter-spacing:-0.156px;">Windows (C:)</div><svg style="left:34.3px;top:585px" width="14" height="7.4" viewBox="0 0 14 7.4"><path d="M2 0H12L14 3.8H0Z" fill="#d2d2d2"/><path d="M2 0H12L12.6 1.2H1.4Z" fill="#e4e4e4"/><rect x="0" y="3.8" width="14" height="3.6" fill="#3a3a3a"/><rect x="0.8" y="4.6" width="8" height="2" fill="#2c2c2c"/><rect x="10" y="4.9" width="1.8" height="1.5" fill="#48e048"/></svg><div class="t " style="left:54px;top:578px;letter-spacing:-0.128px;">Temporary Storage</div><svg style="left:25px;top:610px" width="17" height="16" viewBox="0 0 17 16"><circle cx="10.6" cy="5.6" r="5.4" fill="#4a8cc4"/><path d="M6.4 3.4C7.6 1.4 9.4 1 10.4 1.2C9 2.4 8.6 4 7 4.6Z M13.4 1.6C15 2.6 15.8 4.6 15.6 6.4C14.6 5.4 14.4 3.4 13.4 1.6Z" fill="#c0dcf2"/><path d="M13 9.6C14.6 9 15.6 7.6 15.9 6.6C15.6 9 14 10.6 12 10.9Z" fill="#2c5c88"/><rect x="0.5" y="6.5" width="11" height="7" fill="#48b0fc" stroke="#2a7cc0"/><path d="M1 7H8L1 12Z" fill="#6cc0fc"/><rect x="3" y="15" width="6" height="1" fill="#6a88a8"/><rect x="5" y="14" width="2" height="1" fill="#9ab0c8"/></svg><div class="t " style="left:46px;top:610px;letter-spacing:0.114px;">Network</div>
<div class="a" style="left:175px;top:188px;width:147px;height:156px;background:#fff;border:1px solid #99d1ff;"></div><div class="a" style="left:199px;top:194px;width:93px;height:123px;background:#e9e9e9;box-shadow:2px 2px 3px rgba(0,0,0,.3),1px 1px 0 rgba(0,0,0,.14)"></div><svg style="left:199px;top:194px;overflow:hidden" width="93" height="123" viewBox="0 0 93 123"><clipPath id="c1"><rect x="0" y="0" width="93" height="123"/></clipPath><g clip-path="url(#c1)"><rect width="93" height="123" fill="#e9e9e9"/><clipPath id="k1"><path d="M-50 -50H150V48.71L46.5 87.9L-50 51.36Z"/></clipPath><path d="M46.5 56.8L87.7 72.3V103.2L46.5 118.9L5.299999999999997 103.2V72.3Z" fill="#fff" stroke="#fff" stroke-width="4.2" stroke-linejoin="round"/><path d="M5.299999999999997 72.3L46.5 56.8L87.7 72.3L46.5 87.9Z" fill="#004879"/><path d="M5.299999999999997 72.3L46.5 56.8V64.7L15.9 76.4Z" fill="#002c4b"/><path d="M46.5 64.7L77.1 76.4L46.5 87.9L15.9 76.4Z" fill="#fff"/><g clip-path="url(#k1)"><g transform="translate(32.40 -17.00) rotate(0)"><path d="M0 0H16.9L26.2 9.3V35.5H0Z M16.5 1.9L24.4 9.9H16.5ZM4.4 11.6H22.1V31.0H4.4Z" fill="#0072c6" fill-rule="evenodd"/><rect x="4.75" y="11.95" width="17" height="18.7" fill="none" stroke="#fff" stroke-opacity=".55" stroke-width=".7"/><path d="M6.8 27.9L14.4 19.2L19.3 25.1V27.9Z" fill="#0072c6"/><circle cx="10.6" cy="17.5" r="1.3" fill="#0072c6"/></g></g><path d="M5.299999999999997 72.3L46.5 87.9V118.9L5.299999999999997 103.2Z" fill="#0050a8"/><path d="M87.7 72.3L46.5 87.9V118.9L87.7 103.2Z" fill="#0090d0"/><path d="M5.299999999999997 72.3L46.5 118.9L5.299999999999997 103.2Z" fill="#0038a0" stroke="#0038a0" stroke-width=".5" stroke-linejoin="round"/><path d="M26.5 95.6L46.5 87.9V118.9Z" fill="#005cb2" stroke="#005cb2" stroke-width=".5" stroke-linejoin="round"/><path d="M5.299999999999997 72.3L46.5 87.9L26.5 95.6Z" fill="#005a94" stroke="#005a94" stroke-width=".5" stroke-linejoin="round"/><path d="M87.7 72.3V103.2L46.5 118.9Z" fill="#00a8de" stroke="#00a8de" stroke-width=".5" stroke-linejoin="round"/><path d="M46.5 87.9L66.5 95.6L46.5 118.9Z" fill="#0090d0" stroke="#0090d0" stroke-width=".5" stroke-linejoin="round"/><path d="M46.5 87.9L87.7 72.3L66.5 95.6Z" fill="#0072bb" stroke="#0072bb" stroke-width=".5" stroke-linejoin="round"/></g></svg><div class="t tc " style="left:248.5px;top:325.5px;letter-spacing:-0.197px;">frame.0001.png</div><div class="a" style="left:356px;top:194px;width:93px;height:123px;background:#e9e9e9;box-shadow:2px 2px 3px rgba(0,0,0,.3),1px 1px 0 rgba(0,0,0,.14)"></div><svg style="left:356px;top:194px;overflow:hidden" width="93" height="123" viewBox="0 0 93 123"><clipPath id="c2"><rect x="0" y="0" width="93" height="123"/></clipPath><g clip-path="url(#c2)"><rect width="93" height="123" fill="#e9e9e9"/><clipPath id="k2"><path d="M-50 -50H150V48.71L46.5 87.9L-50 51.36Z"/></clipPath><path d="M46.5 56.8L87.7 72.3V103.2L46.5 118.9L5.299999999999997 103.2V72.3Z" fill="#fff" stroke="#fff" stroke-width="4.2" stroke-linejoin="round"/><path d="M5.299999999999997 72.3L46.5 56.8L87.7 72.3L46.5 87.9Z" fill="#004879"/><path d="M5.299999999999997 72.3L46.5 56.8V64.7L15.9 76.4Z" fill="#002c4b"/><path d="M46.5 64.7L77.1 76.4L46.5 87.9L15.9 76.4Z" fill="#fff"/><g clip-path="url(#k2)"><g transform="translate(32.40 4.40) rotate(0)"><path d="M0 0H16.9L26.2 9.3V35.5H0Z M16.5 1.9L24.4 9.9H16.5ZM4.4 11.6H22.1V31.0H4.4Z" fill="#0072c6" fill-rule="evenodd"/><rect x="4.75" y="11.95" width="17" height="18.7" fill="none" stroke="#fff" stroke-opacity=".55" stroke-width=".7"/><path d="M6.8 27.9L14.4 19.2L19.3 25.1V27.9Z" fill="#0072c6"/><circle cx="10.6" cy="17.5" r="1.3" fill="#0072c6"/></g><g transform="translate(65.20 -33.60) rotate(12.5)"><path d="M0 0H16.9L26.2 9.3V35.5H0Z M16.5 1.9L24.4 9.9H16.5Z" fill="#0072c6" fill-rule="evenodd"/><text x="13.6" y="27.7" font-size="9.7" letter-spacing=".1" text-anchor="middle" stroke="#ececec" stroke-width=".25" fill="#ececec" font-family="Liberation Sans, sans-serif">PDF</text></g></g><path d="M5.299999999999997 72.3L46.5 87.9V118.9L5.299999999999997 103.2Z" fill="#0050a8"/><path d="M87.7 72.3L46.5 87.9V118.9L87.7 103.2Z" fill="#0090d0"/><path d="M5.299999999999997 72.3L46.5 118.9L5.299999999999997 103.2Z" fill="#0038a0" stroke="#0038a0" stroke-width=".5" stroke-linejoin="round"/><path d="M26.5 95.6L46.5 87.9V118.9Z" fill="#005cb2" stroke="#005cb2" stroke-width=".5" stroke-linejoin="round"/><path d="M5.299999999999997 72.3L46.5 87.9L26.5 95.6Z" fill="#005a94" stroke="#005a94" stroke-width=".5" stroke-linejoin="round"/><path d="M87.7 72.3V103.2L46.5 118.9Z" fill="#00a8de" stroke="#00a8de" stroke-width=".5" stroke-linejoin="round"/><path d="M46.5 87.9L66.5 95.6L46.5 118.9Z" fill="#0090d0" stroke="#0090d0" stroke-width=".5" stroke-linejoin="round"/><path d="M46.5 87.9L87.7 72.3L66.5 95.6Z" fill="#0072bb" stroke="#0072bb" stroke-width=".5" stroke-linejoin="round"/></g></svg><div class="t tc " style="left:405.5px;top:325.5px;letter-spacing:-0.197px;">frame.0002.png</div><div class="a" style="left:513px;top:194px;width:93px;height:123px;background:#e9e9e9;box-shadow:2px 2px 3px rgba(0,0,0,.3),1px 1px 0 rgba(0,0,0,.14)"></div><svg style="left:513px;top:194px;overflow:hidden" width="93" height="123" viewBox="0 0 93 123"><clipPath id="c3"><rect x="0" y="0" width="93" height="123"/></clipPath><g clip-path="url(#c3)"><rect width="93" height="123" fill="#e9e9e9"/><clipPath id="k3"><path d="M-50 -50H150V48.71L46.5 87.9L-50 51.36Z"/></clipPath><path d="M46.5 56.8L87.7 72.3V103.2L46.5 118.9L5.299999999999997 103.2V72.3Z" fill="#fff" stroke="#fff" stroke-width="4.2" stroke-linejoin="round"/><path d="M5.299999999999997 72.3L46.5 56.8L87.7 72.3L46.5 87.9Z" fill="#004879"/><path d="M5.299999999999997 72.3L46.5 56.8V64.7L15.9 76.4Z" fill="#002c4b"/><path d="M46.5 64.7L77.1 76.4L46.5 87.9L15.9 76.4Z" fill="#fff"/><g clip-path="url(#k3)"><g transform="translate(32.40 26.00) rotate(0)"><path d="M0 0H16.9L26.2 9.3V35.5H0Z M16.5 1.9L24.4 9.9H16.5ZM4.4 11.6H22.1V31.0H4.4Z" fill="#0072c6" fill-rule="evenodd"/><rect x="4.75" y="11.95" width="17" height="18.7" fill="none" stroke="#fff" stroke-opacity=".55" stroke-width=".7"/><path d="M6.8 27.9L14.4 19.2L19.3 25.1V27.9Z" fill="#0072c6"/><circle cx="10.6" cy="17.5" r="1.3" fill="#0072c6"/></g><g transform="translate(58.50 -12.50) rotate(12.5)"><path d="M0 0H16.9L26.2 9.3V35.5H0Z M16.5 1.9L24.4 9.9H16.5Z" fill="#0072c6" fill-rule="evenodd"/><text x="13.6" y="27.7" font-size="9.7" letter-spacing=".1" text-anchor="middle" stroke="#ececec" stroke-width=".25" fill="#ececec" font-family="Liberation Sans, sans-serif">PDF</text></g><g transform="translate(-19.00 -27.00) rotate(-10)"><path d="M0 0H16.9L26.2 9.3V35.5H0Z M16.5 1.9L24.4 9.9H16.5ZM6.8 11.2H14.8V12.7H6.8ZM6.8 15.7H21.6V17.2H6.8ZM6.8 20.2H21.6V21.7H6.8ZM6.8 24.7H21.6V26.2H6.8ZM6.8 29.2H21.6V30.7H6.8Z" fill="#0072c6" fill-rule="evenodd"/></g></g><path d="M5.299999999999997 72.3L46.5 87.9V118.9L5.299999999999997 103.2Z" fill="#0050a8"/><path d="M87.7 72.3L46.5 87.9V118.9L87.7 103.2Z" fill="#0090d0"/><path d="M5.299999999999997 72.3L46.5 118.9L5.299999999999997 103.2Z" fill="#0038a0" stroke="#0038a0" stroke-width=".5" stroke-linejoin="round"/><path d="M26.5 95.6L46.5 87.9V118.9Z" fill="#005cb2" stroke="#005cb2" stroke-width=".5" stroke-linejoin="round"/><path d="M5.299999999999997 72.3L46.5 87.9L26.5 95.6Z" fill="#005a94" stroke="#005a94" stroke-width=".5" stroke-linejoin="round"/><path d="M87.7 72.3V103.2L46.5 118.9Z" fill="#00a8de" stroke="#00a8de" stroke-width=".5" stroke-linejoin="round"/><path d="M46.5 87.9L66.5 95.6L46.5 118.9Z" fill="#0090d0" stroke="#0090d0" stroke-width=".5" stroke-linejoin="round"/><path d="M46.5 87.9L87.7 72.3L66.5 95.6Z" fill="#0072bb" stroke="#0072bb" stroke-width=".5" stroke-linejoin="round"/></g></svg><div class="t tc " style="left:562.5px;top:325.5px;letter-spacing:-0.197px;">frame.0003.png</div><div class="a" style="left:670px;top:194px;width:93px;height:123px;background:#e9e9e9;box-shadow:2px 2px 3px rgba(0,0,0,.3),1px 1px 0 rgba(0,0,0,.14)"></div><svg style="left:670px;top:194px;overflow:hidden" width="93" height="123" viewBox="0 0 93 123"><clipPath id="c4"><rect x="0" y="0" width="93" height="123"/></clipPath><g clip-path="url(#c4)"><rect width="93" height="123" fill="#e9e9e9"/><clipPath id="k4"><path d="M-50 -50H150V48.71L46.5 87.9L-50 51.36Z"/></clipPath><path d="M46.5 56.8L87.7 72.3V103.2L46.5 118.9L5.299999999999997 103.2V72.3Z" fill="#fff" stroke="#fff" stroke-width="4.2" stroke-linejoin="round"/><path d="M5.299999999999997 72.3L46.5 56.8L87.7 72.3L46.5 87.9Z" fill="#004879"/><path d="M5.299999999999997 72.3L46.5 56.8V64.7L15.9 76.4Z" fill="#002c4b"/><path d="M46.5 64.7L77.1 76.4L46.5 87.9L15.9 76.4Z" fill="#fff"/><g clip-path="url(#k4)"><g transform="translate(32.40 47.40) rotate(0)"><path d="M0 0H16.9L26.2 9.3V35.5H0Z M16.5 1.9L24.4 9.9H16.5ZM4.4 11.6H22.1V31.0H4.4Z" fill="#0072c6" fill-rule="evenodd"/><rect x="4.75" y="11.95" width="17" height="18.7" fill="none" stroke="#fff" stroke-opacity=".55" stroke-width=".7"/><path d="M6.8 27.9L14.4 19.2L19.3 25.1V27.9Z" fill="#0072c6"/><circle cx="10.6" cy="17.5" r="1.3" fill="#0072c6"/></g><g transform="translate(51.90 8.70) rotate(12.5)"><path d="M0 0H16.9L26.2 9.3V35.5H0Z M16.5 1.9L24.4 9.9H16.5Z" fill="#0072c6" fill-rule="evenodd"/><text x="13.6" y="27.7" font-size="9.7" letter-spacing=".1" text-anchor="middle" stroke="#ececec" stroke-width=".25" fill="#ececec" font-family="Liberation Sans, sans-serif">PDF</text></g><g transform="translate(-11.40 -11.80) rotate(-10)"><path d="M0 0H16.9L26.2 9.3V35.5H0Z M16.5 1.9L24.4 9.9H16.5ZM6.8 11.2H14.8V12.7H6.8ZM6.8 15.7H21.6V17.2H6.8ZM6.8 20.2H21.6V21.7H6.8ZM6.8 24.7H21.6V26.2H6.8ZM6.8 29.2H21.6V30.7H6.8Z" fill="#0072c6" fill-rule="evenodd"/></g></g><path d="M5.299999999999997 72.3L46.5 87.9V118.9L5.299999999999997 103.2Z" fill="#0050a8"/><path d="M87.7 72.3L46.5 87.9V118.9L87.7 103.2Z" fill="#0090d0"/><path d="M5.299999999999997 72.3L46.5 118.9L5.299999999999997 103.2Z" fill="#0038a0" stroke="#0038a0" stroke-width=".5" stroke-linejoin="round"/><path d="M26.5 95.6L46.5 87.9V118.9Z" fill="#005cb2" stroke="#005cb2" stroke-width=".5" stroke-linejoin="round"/><path d="M5.299999999999997 72.3L46.5 87.9L26.5 95.6Z" fill="#005a94" stroke="#005a94" stroke-width=".5" stroke-linejoin="round"/><path d="M87.7 72.3V103.2L46.5 118.9Z" fill="#00a8de" stroke="#00a8de" stroke-width=".5" stroke-linejoin="round"/><path d="M46.5 87.9L66.5 95.6L46.5 118.9Z" fill="#0090d0" stroke="#0090d0" stroke-width=".5" stroke-linejoin="round"/><path d="M46.5 87.9L87.7 72.3L66.5 95.6Z" fill="#0072bb" stroke="#0072bb" stroke-width=".5" stroke-linejoin="round"/></g></svg><div class="t tc " style="left:719.5px;top:325.5px;letter-spacing:-0.197px;">frame.0004.png</div><div class="a" style="left:827px;top:194px;width:93px;height:123px;background:#e9e9e9;box-shadow:2px 2px 3px rgba(0,0,0,.3),1px 1px 0 rgba(0,0,0,.14)"></div><svg style="left:827px;top:194px;overflow:hidden" width="93" height="123" viewBox="0 0 93 123"><clipPath id="c5"><rect x="0" y="0" width="93" height="123"/></clipPath><g clip-path="url(#c5)"><rect width="93" height="123" fill="#e9e9e9"/><clipPath id="k5"><path d="M-50 -50H150V48.71L46.5 87.9L-50 51.36Z"/></clipPath><path d="M46.5 56.8L87.7 72.3V103.2L46.5 118.9L5.299999999999997 103.2V72.3Z" fill="#fff" stroke="#fff" stroke-width="4.2" stroke-linejoin="round"/><path d="M5.299999999999997 72.3L46.5 56.8L87.7 72.3L46.5 87.9Z" fill="#004879"/><path d="M5.299999999999997 72.3L46.5 56.8V64.7L15.9 76.4Z" fill="#002c4b"/><path d="M46.5 64.7L77.1 76.4L46.5 87.9L15.9 76.4Z" fill="#fff"/><g clip-path="url(#k5)"><g transform="translate(32.40 68.60) rotate(0)"><path d="M0 0H16.9L26.2 9.3V35.5H0Z M16.5 1.9L24.4 9.9H16.5ZM4.4 11.6H22.1V31.0H4.4Z" fill="#0072c6" fill-rule="evenodd"/><rect x="4.75" y="11.95" width="17" height="18.7" fill="none" stroke="#fff" stroke-opacity=".55" stroke-width=".7"/><path d="M6.8 27.9L14.4 19.2L19.3 25.1V27.9Z" fill="#0072c6"/><circle cx="10.6" cy="17.5" r="1.3" fill="#0072c6"/></g><g transform="translate(45.10 29.60) rotate(12.5)"><path d="M0 0H16.9L26.2 9.3V35.5H0Z M16.5 1.9L24.4 9.9H16.5Z" fill="#0072c6" fill-rule="evenodd"/><text x="13.6" y="27.7" font-size="9.7" letter-spacing=".1" text-anchor="middle" stroke="#ececec" stroke-width=".25" fill="#ececec" font-family="Liberation Sans, sans-serif">PDF</text></g><g transform="translate(-3.70 3.80) rotate(-10)"><path d="M0 0H16.9L26.2 9.3V35.5H0Z M16.5 1.9L24.4 9.9H16.5ZM6.8 11.2H14.8V12.7H6.8ZM6.8 15.7H21.6V17.2H6.8ZM6.8 20.2H21.6V21.7H6.8ZM6.8 24.7H21.6V26.2H6.8ZM6.8 29.2H21.6V30.7H6.8Z" fill="#0072c6" fill-rule="evenodd"/></g></g><path d="M5.299999999999997 72.3L46.5 87.9V118.9L5.299999999999997 103.2Z" fill="#0050a8"/><path d="M87.7 72.3L46.5 87.9V118.9L87.7 103.2Z" fill="#0090d0"/><path d="M5.299999999999997 72.3L46.5 118.9L5.299999999999997 103.2Z" fill="#0038a0" stroke="#0038a0" stroke-width=".5" stroke-linejoin="round"/><path d="M26.5 95.6L46.5 87.9V118.9Z" fill="#005cb2" stroke="#005cb2" stroke-width=".5" stroke-linejoin="round"/><path d="M5.299999999999997 72.3L46.5 87.9L26.5 95.6Z" fill="#005a94" stroke="#005a94" stroke-width=".5" stroke-linejoin="round"/><path d="M87.7 72.3V103.2L46.5 118.9Z" fill="#00a8de" stroke="#00a8de" stroke-width=".5" stroke-linejoin="round"/><path d="M46.5 87.9L66.5 95.6L46.5 118.9Z" fill="#0090d0" stroke="#0090d0" stroke-width=".5" stroke-linejoin="round"/><path d="M46.5 87.9L87.7 72.3L66.5 95.6Z" fill="#0072bb" stroke="#0072bb" stroke-width=".5" stroke-linejoin="round"/></g></svg><div class="t tc " style="left:876.5px;top:325.5px;letter-spacing:-0.197px;">frame.0005.png</div><div class="a" style="left:984px;top:194px;width:93px;height:123px;background:#e9e9e9;box-shadow:2px 2px 3px rgba(0,0,0,.3),1px 1px 0 rgba(0,0,0,.14)"></div><svg style="left:984px;top:194px;overflow:hidden" width="93" height="123" viewBox="0 0 93 123"><clipPath id="c6"><rect x="0" y="0" width="93" height="123"/></clipPath><g clip-path="url(#c6)"><rect width="93" height="123" fill="#e9e9e9"/><clipPath id="k6"><path d="M-50 -50H150V48.71L46.5 87.9L-50 51.36Z"/></clipPath><path d="M46.5 56.8L87.7 72.3V103.2L46.5 118.9L5.299999999999997 103.2V72.3Z" fill="#fff" stroke="#fff" stroke-width="4.2" stroke-linejoin="round"/><path d="M5.299999999999997 72.3L46.5 56.8L87.7 72.3L46.5 87.9Z" fill="#004879"/><path d="M5.299999999999997 72.3L46.5 56.8V64.7L15.9 76.4Z" fill="#002c4b"/><path d="M46.5 64.7L77.1 76.4L46.5 87.9L15.9 76.4Z" fill="#fff"/><g clip-path="url(#k6)"><g transform="translate(38.20 50.70) rotate(12.5)"><path d="M0 0H16.9L26.2 9.3V35.5H0Z M16.5 1.9L24.4 9.9H16.5Z" fill="#0072c6" fill-rule="evenodd"/><text x="13.6" y="27.7" font-size="9.7" letter-spacing=".1" text-anchor="middle" stroke="#fff" stroke-width=".25" fill="#fff" font-family="Liberation Sans, sans-serif">PDF</text></g><g transform="translate(3.90 18.50) rotate(-10)"><path d="M0 0H16.9L26.2 9.3V35.5H0Z M16.5 1.9L24.4 9.9H16.5ZM6.8 11.2H14.8V12.7H6.8ZM6.8 15.7H21.6V17.2H6.8ZM6.8 20.2H21.6V21.7H6.8ZM6.8 24.7H21.6V26.2H6.8ZM6.8 29.2H21.6V30.7H6.8Z" fill="#0072c6" fill-rule="evenodd"/></g><g transform="translate(32.80 -21.00) rotate(0)"><path d="M0 0H16.9L26.2 9.3V35.5H0Z M16.5 1.9L24.4 9.9H16.5ZM4.2 12.2H22.1V31.2H4.2Z" fill="#0072c6" fill-rule="evenodd"/><rect x="4.5" y="12.5" width="17.3" height="18.4" fill="none" stroke="#fff" stroke-opacity=".5" stroke-width=".6"/><path d="M5.9 13.5H10.1V16.1H5.9ZM11.8 13.5H20.2V16.1H11.8ZM5.9 18.1H10.1V20.7H5.9ZM11.8 18.1H20.2V20.7H11.8ZM5.9 22.6H10.1V25.2H5.9ZM11.8 22.6H20.2V25.2H11.8ZM5.9 27.1H10.1V29.7H5.9ZM11.8 27.1H20.2V29.7H11.8Z" fill="#0072c6"/></g></g><path d="M5.299999999999997 72.3L46.5 87.9V118.9L5.299999999999997 103.2Z" fill="#0050a8"/><path d="M87.7 72.3L46.5 87.9V118.9L87.7 103.2Z" fill="#0090d0"/><path d="M5.299999999999997 72.3L46.5 118.9L5.299999999999997 103.2Z" fill="#0038a0" stroke="#0038a0" stroke-width=".5" stroke-linejoin="round"/><path d="M26.5 95.6L46.5 87.9V118.9Z" fill="#005cb2" stroke="#005cb2" stroke-width=".5" stroke-linejoin="round"/><path d="M5.299999999999997 72.3L46.5 87.9L26.5 95.6Z" fill="#005a94" stroke="#005a94" stroke-width=".5" stroke-linejoin="round"/><path d="M87.7 72.3V103.2L46.5 118.9Z" fill="#00a8de" stroke="#00a8de" stroke-width=".5" stroke-linejoin="round"/><path d="M46.5 87.9L66.5 95.6L46.5 118.9Z" fill="#0090d0" stroke="#0090d0" stroke-width=".5" stroke-linejoin="round"/><path d="M46.5 87.9L87.7 72.3L66.5 95.6Z" fill="#0072bb" stroke="#0072bb" stroke-width=".5" stroke-linejoin="round"/></g></svg><div class="t tc " style="left:1033.5px;top:325.5px;letter-spacing:-0.197px;">frame.0006.png</div><div class="a" style="left:1141px;top:194px;width:93px;height:123px;background:#e9e9e9;box-shadow:2px 2px 3px rgba(0,0,0,.3),1px 1px 0 rgba(0,0,0,.14)"></div><svg style="left:1141px;top:194px;overflow:hidden" width="93" height="123" viewBox="0 0 93 123"><clipPath id="c7"><rect x="0" y="0" width="93" height="123"/></clipPath><g clip-path="url(#c7)"><rect width="93" height="123" fill="#e9e9e9"/><clipPath id="k7"><path d="M-50 -50H150V48.71L46.5 87.9L-50 51.36Z"/></clipPath><path d="M46.5 56.8L87.7 72.3V103.2L46.5 118.9L5.299999999999997 103.2V72.3Z" fill="#fff" stroke="#fff" stroke-width="4.2" stroke-linejoin="round"/><path d="M5.299999999999997 72.3L46.5 56.8L87.7 72.3L46.5 87.9Z" fill="#004879"/><path d="M5.299999999999997 72.3L46.5 56.8V64.7L15.9 76.4Z" fill="#002c4b"/><path d="M46.5 64.7L77.1 76.4L46.5 87.9L15.9 76.4Z" fill="#fff"/><g clip-path="url(#k7)"><g transform="translate(31.30 72.10) rotate(12.5)"><path d="M0 0H16.9L26.2 9.3V35.5H0Z M16.5 1.9L24.4 9.9H16.5Z" fill="#0072c6" fill-rule="evenodd"/><text x="13.6" y="27.7" font-size="9.7" letter-spacing=".1" text-anchor="middle" stroke="#fff" stroke-width=".25" fill="#fff" font-family="Liberation Sans, sans-serif">PDF</text></g><g transform="translate(12.30 34.40) rotate(-10)"><path d="M0 0H16.9L26.2 9.3V35.5H0Z M16.5 1.9L24.4 9.9H16.5ZM6.8 11.2H14.8V12.7H6.8ZM6.8 15.7H21.6V17.2H6.8ZM6.8 20.2H21.6V21.7H6.8ZM6.8 24.7H21.6V26.2H6.8ZM6.8 29.2H21.6V30.7H6.8Z" fill="#0072c6" fill-rule="evenodd"/></g><g transform="translate(32.80 -6.90) rotate(0)"><path d="M0 0H16.9L26.2 9.3V35.5H0Z M16.5 1.9L24.4 9.9H16.5ZM4.2 12.2H22.1V31.2H4.2Z" fill="#0072c6" fill-rule="evenodd"/><rect x="4.5" y="12.5" width="17.3" height="18.4" fill="none" stroke="#fff" stroke-opacity=".5" stroke-width=".6"/><path d="M5.9 13.5H10.1V16.1H5.9ZM11.8 13.5H20.2V16.1H11.8ZM5.9 18.1H10.1V20.7H5.9ZM11.8 18.1H20.2V20.7H11.8ZM5.9 22.6H10.1V25.2H5.9ZM11.8 22.6H20.2V25.2H11.8ZM5.9 27.1H10.1V29.7H5.9ZM11.8 27.1H20.2V29.7H11.8Z" fill="#0072c6"/></g></g><path d="M5.299999999999997 72.3L46.5 87.9V118.9L5.299999999999997 103.2Z" fill="#0050a8"/><path d="M87.7 72.3L46.5 87.9V118.9L87.7 103.2Z" fill="#0090d0"/><path d="M5.299999999999997 72.3L46.5 118.9L5.299999999999997 103.2Z" fill="#0038a0" stroke="#0038a0" stroke-width=".5" stroke-linejoin="round"/><path d="M26.5 95.6L46.5 87.9V118.9Z" fill="#005cb2" stroke="#005cb2" stroke-width=".5" stroke-linejoin="round"/><path d="M5.299999999999997 72.3L46.5 87.9L26.5 95.6Z" fill="#005a94" stroke="#005a94" stroke-width=".5" stroke-linejoin="round"/><path d="M87.7 72.3V103.2L46.5 118.9Z" fill="#00a8de" stroke="#00a8de" stroke-width=".5" stroke-linejoin="round"/><path d="M46.5 87.9L66.5 95.6L46.5 118.9Z" fill="#0090d0" stroke="#0090d0" stroke-width=".5" stroke-linejoin="round"/><path d="M46.5 87.9L87.7 72.3L66.5 95.6Z" fill="#0072bb" stroke="#0072bb" stroke-width=".5" stroke-linejoin="round"/></g></svg><div class="t tc " style="left:1190.5px;top:325.5px;letter-spacing:-0.197px;">frame.0007.png</div><div class="a" style="left:199px;top:351px;width:93px;height:123px;background:#e9e9e9;box-shadow:2px 2px 3px rgba(0,0,0,.3),1px 1px 0 rgba(0,0,0,.14)"></div><svg style="left:199px;top:351px;overflow:hidden" width="93" height="123" viewBox="0 0 93 123"><clipPath id="c8"><rect x="0" y="0" width="93" height="123"/></clipPath><g clip-path="url(#c8)"><rect width="93" height="123" fill="#e9e9e9"/><clipPath id="k8"><path d="M-50 -50H150V48.71L46.5 87.9L-50 51.36Z"/></clipPath><path d="M46.5 56.8L87.7 72.3V103.2L46.5 118.9L5.299999999999997 103.2V72.3Z" fill="#fff" stroke="#fff" stroke-width="4.2" stroke-linejoin="round"/><path d="M5.299999999999997 72.3L46.5 56.8L87.7 72.3L46.5 87.9Z" fill="#004879"/><path d="M5.299999999999997 72.3L46.5 56.8V64.7L15.9 76.4Z" fill="#002c4b"/><path d="M46.5 64.7L77.1 76.4L46.5 87.9L15.9 76.4Z" fill="#fff"/><g clip-path="url(#k8)"><g transform="translate(20.50 49.60) rotate(-10)"><path d="M0 0H16.9L26.2 9.3V35.5H0Z M16.5 1.9L24.4 9.9H16.5ZM6.8 11.2H14.8V12.7H6.8ZM6.8 15.7H21.6V17.2H6.8ZM6.8 20.2H21.6V21.7H6.8ZM6.8 24.7H21.6V26.2H6.8ZM6.8 29.2H21.6V30.7H6.8Z" fill="#0072c6" fill-rule="evenodd"/></g><g transform="translate(32.80 7.20) rotate(0)"><path d="M0 0H16.9L26.2 9.3V35.5H0Z M16.5 1.9L24.4 9.9H16.5ZM4.2 12.2H22.1V31.2H4.2Z" fill="#0072c6" fill-rule="evenodd"/><rect x="4.5" y="12.5" width="17.3" height="18.4" fill="none" stroke="#fff" stroke-opacity=".5" stroke-width=".6"/><path d="M5.9 13.5H10.1V16.1H5.9ZM11.8 13.5H20.2V16.1H11.8ZM5.9 18.1H10.1V20.7H5.9ZM11.8 18.1H20.2V20.7H11.8ZM5.9 22.6H10.1V25.2H5.9ZM11.8 22.6H20.2V25.2H11.8ZM5.9 27.1H10.1V29.7H5.9ZM11.8 27.1H20.2V29.7H11.8Z" fill="#0072c6"/></g><g transform="translate(63.30 -32.00) rotate(15)"><path d="M0 0H16.9L26.2 9.3V35.5H0Z M16.5 1.9L24.4 9.9H16.5ZM5.8 10.6H13.6V12.1H5.8ZM5.8 15.0H19.4V16.5H5.8ZM4.6 19.8H8.6V21.3H4.6ZM4.6 23.8H8.6V25.3H4.6ZM4.6 27.8H8.6V29.3H4.6ZM10.6 19.2H20.8V30.6H10.6Z" fill="#0072c6" fill-rule="evenodd"/><rect x="10.9" y="19.5" width="9.6" height="10.8" fill="none" stroke="#fff" stroke-opacity=".55" stroke-width=".6"/><path d="M12 28.8L16.2 23.4L19.2 27.2V28.8Z" fill="#0072c6"/><circle cx="14" cy="22.2" r="0.9" fill="#0072c6"/></g></g><path d="M5.299999999999997 72.3L46.5 87.9V118.9L5.299999999999997 103.2Z" fill="#0050a8"/><path d="M87.7 72.3L46.5 87.9V118.9L87.7 103.2Z" fill="#0090d0"/><path d="M5.299999999999997 72.3L46.5 118.9L5.299999999999997 103.2Z" fill="#0038a0" stroke="#0038a0" stroke-width=".5" stroke-linejoin="round"/><path d="M26.5 95.6L46.5 87.9V118.9Z" fill="#005cb2" stroke="#005cb2" stroke-width=".5" stroke-linejoin="round"/><path d="M5.299999999999997 72.3L46.5 87.9L26.5 95.6Z" fill="#005a94" stroke="#005a94" stroke-width=".5" stroke-linejoin="round"/><path d="M87.7 72.3V103.2L46.5 118.9Z" fill="#00a8de" stroke="#00a8de" stroke-width=".5" stroke-linejoin="round"/><path d="M46.5 87.9L66.5 95.6L46.5 118.9Z" fill="#0090d0" stroke="#0090d0" stroke-width=".5" stroke-linejoin="round"/><path d="M46.5 87.9L87.7 72.3L66.5 95.6Z" fill="#0072bb" stroke="#0072bb" stroke-width=".5" stroke-linejoin="round"/></g></svg><div class="t tc " style="left:248.5px;top:482.5px;letter-spacing:-0.197px;">frame.0008.png</div><div class="a" style="left:356px;top:351px;width:93px;height:123px;background:#e9e9e9;box-shadow:2px 2px 3px rgba(0,0,0,.3),1px 1px 0 rgba(0,0,0,.14)"></div><svg style="left:356px;top:351px;overflow:hidden" width="93" height="123" viewBox="0 0 93 123"><clipPath id="c9"><rect x="0" y="0" width="93" height="123"/></clipPath><g clip-path="url(#c9)"><rect width="93" height="123" fill="#e9e9e9"/><clipPath id="k9"><path d="M-50 -50H150V48.71L46.5 87.9L-50 51.36Z"/></clipPath><path d="M46.5 56.8L87.7 72.3V103.2L46.5 118.9L5.299999999999997 103.2V72.3Z" fill="#fff" stroke="#fff" stroke-width="4.2" stroke-linejoin="round"/><path d="M5.299999999999997 72.3L46.5 56.8L87.7 72.3L46.5 87.9Z" fill="#004879"/><path d="M5.299999999999997 72.3L46.5 56.8V64.7L15.9 76.4Z" fill="#002c4b"/><path d="M46.5 64.7L77.1 76.4L46.5 87.9L15.9 76.4Z" fill="#fff"/><g clip-path="url(#k9)"><g transform="translate(28.40 65.60) rotate(-10)"><path d="M0 0H16.9L26.2 9.3V35.5H0Z M16.5 1.9L24.4 9.9H16.5ZM6.8 11.2H14.8V12.7H6.8ZM6.8 15.7H21.6V17.2H6.8ZM6.8 20.2H21.6V21.7H6.8ZM6.8 24.7H21.6V26.2H6.8ZM6.8 29.2H21.6V30.7H6.8Z" fill="#0072c6" fill-rule="evenodd"/></g><g transform="translate(32.80 21.40) rotate(0)"><path d="M0 0H16.9L26.2 9.3V35.5H0Z M16.5 1.9L24.4 9.9H16.5ZM4.2 12.2H22.1V31.2H4.2Z" fill="#0072c6" fill-rule="evenodd"/><rect x="4.5" y="12.5" width="17.3" height="18.4" fill="none" stroke="#fff" stroke-opacity=".5" stroke-width=".6"/><path d="M5.9 13.5H10.1V16.1H5.9ZM11.8 13.5H20.2V16.1H11.8ZM5.9 18.1H10.1V20.7H5.9ZM11.8 18.1H20.2V20.7H11.8ZM5.9 22.6H10.1V25.2H5.9ZM11.8 22.6H20.2V25.2H11.8ZM5.9 27.1H10.1V29.7H5.9ZM11.8 27.1H20.2V29.7H11.8Z" fill="#0072c6"/></g><g transform="translate(59.40 -18.00) rotate(15)"><path d="M0 0H16.9L26.2 9.3V35.5H0Z M16.5 1.9L24.4 9.9H16.5ZM5.8 10.6H13.6V12.1H5.8ZM5.8 15.0H19.4V16.5H5.8ZM4.6 19.8H8.6V21.3H4.6ZM4.6 23.8H8.6V25.3H4.6ZM4.6 27.8H8.6V29.3H4.6ZM10.6 19.2H20.8V30.6H10.6Z" fill="#0072c6" fill-rule="evenodd"/><rect x="10.9" y="19.5" width="9.6" height="10.8" fill="none" stroke="#fff" stroke-opacity=".55" stroke-width=".6"/><path d="M12 28.8L16.2 23.4L19.2 27.2V28.8Z" fill="#0072c6"/><circle cx="14" cy="22.2" r="0.9" fill="#0072c6"/></g><g transform="translate(-16.80 -20.30) rotate(-15)"><mask id="m12" maskUnits="userSpaceOnUse" x="-5" y="-5" width="50" height="45"><rect x="-5" y="-5" width="50" height="45" fill="#fff"/><path d="M0.3 1.6L15.2 9.8L30.7 0.2" stroke="#000" stroke-width="0.9" fill="none"/><g transform="translate(32.7 15.3) rotate(47)"><path d="M-4.5 -1.2H4.5V22.8L0 25.6L-4.5 22.8Z" fill="#000"/></g></mask><g mask="url(#m12)"><path d="M0 0H31V19.0Q31 21.5 28.5 21.5H2.5Q0 21.5 0 19.0Z" fill="#0072c6"/></g><g transform="translate(32.7 15.3) rotate(47)"><rect x="-3.4" y="0" width="6.8" height="3.9" fill="#0072c6"/><rect x="-3.4" y="4.8" width="6.8" height="10.6" fill="#0072c6"/><path d="M-3.4 16.3H3.4L0 22.2Z" fill="#0072c6"/></g></g></g><path d="M5.299999999999997 72.3L46.5 87.9V118.9L5.299999999999997 103.2Z" fill="#0050a8"/><path d="M87.7 72.3L46.5 87.9V118.9L87.7 103.2Z" fill="#0090d0"/><path d="M5.299999999999997 72.3L46.5 118.9L5.299999999999997 103.2Z" fill="#0038a0" stroke="#0038a0" stroke-width=".5" stroke-linejoin="round"/><path d="M26.5 95.6L46.5 87.9V118.9Z" fill="#005cb2" stroke="#005cb2" stroke-width=".5" stroke-linejoin="round"/><path d="M5.299999999999997 72.3L46.5 87.9L26.5 95.6Z" fill="#005a94" stroke="#005a94" stroke-width=".5" stroke-linejoin="round"/><path d="M87.7 72.3V103.2L46.5 118.9Z" fill="#00a8de" stroke="#00a8de" stroke-width=".5" stroke-linejoin="round"/><path d="M46.5 87.9L66.5 95.6L46.5 118.9Z" fill="#0090d0" stroke="#0090d0" stroke-width=".5" stroke-linejoin="round"/><path d="M46.5 87.9L87.7 72.3L66.5 95.6Z" fill="#0072bb" stroke="#0072bb" stroke-width=".5" stroke-linejoin="round"/></g></svg><div class="t tc " style="left:405.5px;top:482.5px;letter-spacing:-0.197px;">frame.0009.png</div><div class="a" style="left:513px;top:351px;width:93px;height:123px;background:#e9e9e9;box-shadow:2px 2px 3px rgba(0,0,0,.3),1px 1px 0 rgba(0,0,0,.14)"></div><svg style="left:513px;top:351px;overflow:hidden" width="93" height="123" viewBox="0 0 93 123"><clipPath id="c10"><rect x="0" y="0" width="93" height="123"/></clipPath><g clip-path="url(#c10)"><rect width="93" height="123" fill="#e9e9e9"/><clipPath id="k10"><path d="M-50 -50H150V48.71L46.5 87.9L-50 51.36Z"/></clipPath><path d="M46.5 56.8L87.7 72.3V103.2L46.5 118.9L5.299999999999997 103.2V72.3Z" fill="#fff" stroke="#fff" stroke-width="4.2" stroke-linejoin="round"/><path d="M5.299999999999997 72.3L46.5 56.8L87.7 72.3L46.5 87.9Z" fill="#004879"/><path d="M5.299999999999997 72.3L46.5 56.8V64.7L15.9 76.4Z" fill="#002c4b"/><path d="M46.5 64.7L77.1 76.4L46.5 87.9L15.9 76.4Z" fill="#fff"/><g clip-path="url(#k10)"><g transform="translate(35.80 80.40) rotate(-10)"><path d="M0 0H16.9L26.2 9.3V35.5H0Z M16.5 1.9L24.4 9.9H16.5ZM6.8 11.2H14.8V12.7H6.8ZM6.8 15.7H21.6V17.2H6.8ZM6.8 20.2H21.6V21.7H6.8ZM6.8 24.7H21.6V26.2H6.8ZM6.8 29.2H21.6V30.7H6.8Z" fill="#0072c6" fill-rule="evenodd"/></g><g transform="translate(32.80 35.40) rotate(0)"><path d="M0 0H16.9L26.2 9.3V35.5H0Z M16.5 1.9L24.4 9.9H16.5ZM4.2 12.2H22.1V31.2H4.2Z" fill="#0072c6" fill-rule="evenodd"/><rect x="4.5" y="12.5" width="17.3" height="18.4" fill="none" stroke="#fff" stroke-opacity=".5" stroke-width=".6"/><path d="M5.9 13.5H10.1V16.1H5.9ZM11.8 13.5H20.2V16.1H11.8ZM5.9 18.1H10.1V20.7H5.9ZM11.8 18.1H20.2V20.7H11.8ZM5.9 22.6H10.1V25.2H5.9ZM11.8 22.6H20.2V25.2H11.8ZM5.9 27.1H10.1V29.7H5.9ZM11.8 27.1H20.2V29.7H11.8Z" fill="#0072c6"/></g><g transform="translate(55.50 -4.00) rotate(15)"><path d="M0 0H16.9L26.2 9.3V35.5H0Z M16.5 1.9L24.4 9.9H16.5ZM5.8 10.6H13.6V12.1H5.8ZM5.8 15.0H19.4V16.5H5.8ZM4.6 19.8H8.6V21.3H4.6ZM4.6 23.8H8.6V25.3H4.6ZM4.6 27.8H8.6V29.3H4.6ZM10.6 19.2H20.8V30.6H10.6Z" fill="#0072c6" fill-rule="evenodd"/><rect x="10.9" y="19.5" width="9.6" height="10.8" fill="none" stroke="#fff" stroke-opacity=".55" stroke-width=".6"/><path d="M12 28.8L16.2 23.4L19.2 27.2V28.8Z" fill="#0072c6"/><circle cx="14" cy="22.2" r="0.9" fill="#0072c6"/></g><g transform="translate(-12.40 -9.60) rotate(-15)"><mask id="m13" maskUnits="userSpaceOnUse" x="-5" y="-5" width="50" height="45"><rect x="-5" y="-5" width="50" height="45" fill="#fff"/><path d="M0.3 1.6L15.2 9.8L30.7 0.2" stroke="#000" stroke-width="0.9" fill="none"/><g transform="translate(32.7 15.3) rotate(47)"><path d="M-4.5 -1.2H4.5V22.8L0 25.6L-4.5 22.8Z" fill="#000"/></g></mask><g mask="url(#m13)"><path d="M0 0H31V19.0Q31 21.5 28.5 21.5H2.5Q0 21.5 0 19.0Z" fill="#0072c6"/></g><g transform="translate(32.7 15.3) rotate(47)"><rect x="-3.4" y="0" width="6.8" height="3.9" fill="#0072c6"/><rect x="-3.4" y="4.8" width="6.8" height="10.6" fill="#0072c6"/><path d="M-3.4 16.3H3.4L0 22.2Z" fill="#0072c6"/></g></g></g><path d="M5.299999999999997 72.3L46.5 87.9V118.9L5.299999999999997 103.2Z" fill="#0050a8"/><path d="M87.7 72.3L46.5 87.9V118.9L87.7 103.2Z" fill="#0090d0"/><path d="M5.299999999999997 72.3L46.5 118.9L5.299999999999997 103.2Z" fill="#0038a0" stroke="#0038a0" stroke-width=".5" stroke-linejoin="round"/><path d="M26.5 95.6L46.5 87.9V118.9Z" fill="#005cb2" stroke="#005cb2" stroke-width=".5" stroke-linejoin="round"/><path d="M5.299999999999997 72.3L46.5 87.9L26.5 95.6Z" fill="#005a94" stroke="#005a94" stroke-width=".5" stroke-linejoin="round"/><path d="M87.7 72.3V103.2L46.5 118.9Z" fill="#00a8de" stroke="#00a8de" stroke-width=".5" stroke-linejoin="round"/><path d="M46.5 87.9L66.5 95.6L46.5 118.9Z" fill="#0090d0" stroke="#0090d0" stroke-width=".5" stroke-linejoin="round"/><path d="M46.5 87.9L87.7 72.3L66.5 95.6Z" fill="#0072bb" stroke="#0072bb" stroke-width=".5" stroke-linejoin="round"/></g></svg><div class="t tc " style="left:562.5px;top:482.5px;letter-spacing:-0.197px;">frame.0010.png</div><div class="a" style="left:670px;top:351px;width:93px;height:123px;background:#e9e9e9;box-shadow:2px 2px 3px rgba(0,0,0,.3),1px 1px 0 rgba(0,0,0,.14)"></div><svg style="left:670px;top:351px;overflow:hidden" width="93" height="123" viewBox="0 0 93 123"><clipPath id="c11"><rect x="0" y="0" width="93" height="123"/></clipPath><g clip-path="url(#c11)"><rect width="93" height="123" fill="#e9e9e9"/><clipPath id="k11"><path d="M-50 -50H150V48.71L46.5 87.9L-50 51.36Z"/></clipPath><path d="M46.5 56.8L87.7 72.3V103.2L46.5 118.9L5.299999999999997 103.2V72.3Z" fill="#fff" stroke="#fff" stroke-width="4.2" stroke-linejoin="round"/><path d="M5.299999999999997 72.3L46.5 56.8L87.7 72.3L46.5 87.9Z" fill="#004879"/><path d="M5.299999999999997 72.3L46.5 56.8V64.7L15.9 76.4Z" fill="#002c4b"/><path d="M46.5 64.7L77.1 76.4L46.5 87.9L15.9 76.4Z" fill="#fff"/><g clip-path="url(#k11)"><g transform="translate(32.80 50.00) rotate(0)"><path d="M0 0H16.9L26.2 9.3V35.5H0Z M16.5 1.9L24.4 9.9H16.5ZM4.2 12.2H22.1V31.2H4.2Z" fill="#0072c6" fill-rule="evenodd"/><rect x="4.5" y="12.5" width="17.3" height="18.4" fill="none" stroke="#fff" stroke-opacity=".5" stroke-width=".6"/><path d="M5.9 13.5H10.1V16.1H5.9ZM11.8 13.5H20.2V16.1H11.8ZM5.9 18.1H10.1V20.7H5.9ZM11.8 18.1H20.2V20.7H11.8ZM5.9 22.6H10.1V25.2H5.9ZM11.8 22.6H20.2V25.2H11.8ZM5.9 27.1H10.1V29.7H5.9ZM11.8 27.1H20.2V29.7H11.8Z" fill="#0072c6"/></g><g transform="translate(51.60 10.20) rotate(15)"><path d="M0 0H16.9L26.2 9.3V35.5H0Z M16.5 1.9L24.4 9.9H16.5ZM5.8 10.6H13.6V12.1H5.8ZM5.8 15.0H19.4V16.5H5.8ZM4.6 19.8H8.6V21.3H4.6ZM4.6 23.8H8.6V25.3H4.6ZM4.6 27.8H8.6V29.3H4.6ZM10.6 19.2H20.8V30.6H10.6Z" fill="#0072c6" fill-rule="evenodd"/><rect x="10.9" y="19.5" width="9.6" height="10.8" fill="none" stroke="#fff" stroke-opacity=".55" stroke-width=".6"/><path d="M12 28.8L16.2 23.4L19.2 27.2V28.8Z" fill="#0072c6"/><circle cx="14" cy="22.2" r="0.9" fill="#0072c6"/></g><g transform="translate(-8.00 1.00) rotate(-15)"><mask id="m14" maskUnits="userSpaceOnUse" x="-5" y="-5" width="50" height="45"><rect x="-5" y="-5" width="50" height="45" fill="#fff"/><path d="M0.3 1.6L15.2 9.8L30.7 0.2" stroke="#000" stroke-width="0.9" fill="none"/><g transform="translate(32.7 15.3) rotate(47)"><path d="M-4.5 -1.2H4.5V22.8L0 25.6L-4.5 22.8Z" fill="#000"/></g></mask><g mask="url(#m14)"><path d="M0 0H31V19.0Q31 21.5 28.5 21.5H2.5Q0 21.5 0 19.0Z" fill="#0072c6"/></g><g transform="translate(32.7 15.3) rotate(47)"><rect x="-3.4" y="0" width="6.8" height="3.9" fill="#0072c6"/><rect x="-3.4" y="4.8" width="6.8" height="10.6" fill="#0072c6"/><path d="M-3.4 16.3H3.4L0 22.2Z" fill="#0072c6"/></g></g></g><path d="M5.299999999999997 72.3L46.5 87.9V118.9L5.299999999999997 103.2Z" fill="#0050a8"/><path d="M87.7 72.3L46.5 87.9V118.9L87.7 103.2Z" fill="#0090d0"/><path d="M5.299999999999997 72.3L46.5 118.9L5.299999999999997 103.2Z" fill="#0038a0" stroke="#0038a0" stroke-width=".5" stroke-linejoin="round"/><path d="M26.5 95.6L46.5 87.9V118.9Z" fill="#005cb2" stroke="#005cb2" stroke-width=".5" stroke-linejoin="round"/><path d="M5.299999999999997 72.3L46.5 87.9L26.5 95.6Z" fill="#005a94" stroke="#005a94" stroke-width=".5" stroke-linejoin="round"/><path d="M87.7 72.3V103.2L46.5 118.9Z" fill="#00a8de" stroke="#00a8de" stroke-width=".5" stroke-linejoin="round"/><path d="M46.5 87.9L66.5 95.6L46.5 118.9Z" fill="#0090d0" stroke="#0090d0" stroke-width=".5" stroke-linejoin="round"/><path d="M46.5 87.9L87.7 72.3L66.5 95.6Z" fill="#0072bb" stroke="#0072bb" stroke-width=".5" stroke-linejoin="round"/></g></svg><div class="t tc " style="left:719.5px;top:482.5px;letter-spacing:-0.129px;">frame.0011.png</div><div class="a" style="left:827px;top:351px;width:93px;height:123px;background:#e9e9e9;box-shadow:2px 2px 3px rgba(0,0,0,.3),1px 1px 0 rgba(0,0,0,.14)"></div><svg style="left:827px;top:351px;overflow:hidden" width="93" height="123" viewBox="0 0 93 123"><clipPath id="c12"><rect x="0" y="0" width="93" height="123"/></clipPath><g clip-path="url(#c12)"><rect width="93" height="123" fill="#e9e9e9"/><clipPath id="k12"><path d="M-50 -50H150V48.71L46.5 87.9L-50 51.36Z"/></clipPath><path d="M46.5 56.8L87.7 72.3V103.2L46.5 118.9L5.299999999999997 103.2V72.3Z" fill="#fff" stroke="#fff" stroke-width="4.2" stroke-linejoin="round"/><path d="M5.299999999999997 72.3L46.5 56.8L87.7 72.3L46.5 87.9Z" fill="#004879"/><path d="M5.299999999999997 72.3L46.5 56.8V64.7L15.9 76.4Z" fill="#002c4b"/><path d="M46.5 64.7L77.1 76.4L46.5 87.9L15.9 76.4Z" fill="#fff"/><g clip-path="url(#k12)"><g transform="translate(32.80 64.20) rotate(0)"><path d="M0 0H16.9L26.2 9.3V35.5H0Z M16.5 1.9L24.4 9.9H16.5ZM4.2 12.2H22.1V31.2H4.2Z" fill="#0072c6" fill-rule="evenodd"/><rect x="4.5" y="12.5" width="17.3" height="18.4" fill="none" stroke="#fff" stroke-opacity=".5" stroke-width=".6"/><path d="M5.9 13.5H10.1V16.1H5.9ZM11.8 13.5H20.2V16.1H11.8ZM5.9 18.1H10.1V20.7H5.9ZM11.8 18.1H20.2V20.7H11.8ZM5.9 22.6H10.1V25.2H5.9ZM11.8 22.6H20.2V25.2H11.8ZM5.9 27.1H10.1V29.7H5.9ZM11.8 27.1H20.2V29.7H11.8Z" fill="#0072c6"/></g><g transform="translate(47.70 24.40) rotate(15)"><path d="M0 0H16.9L26.2 9.3V35.5H0Z M16.5 1.9L24.4 9.9H16.5ZM5.8 10.6H13.6V12.1H5.8ZM5.8 15.0H19.4V16.5H5.8ZM4.6 19.8H8.6V21.3H4.6ZM4.6 23.8H8.6V25.3H4.6ZM4.6 27.8H8.6V29.3H4.6ZM10.6 19.2H20.8V30.6H10.6Z" fill="#0072c6" fill-rule="evenodd"/><rect x="10.9" y="19.5" width="9.6" height="10.8" fill="none" stroke="#fff" stroke-opacity=".55" stroke-width=".6"/><path d="M12 28.8L16.2 23.4L19.2 27.2V28.8Z" fill="#0072c6"/><circle cx="14" cy="22.2" r="0.9" fill="#0072c6"/></g><g transform="translate(-3.70 11.70) rotate(-15)"><mask id="m15" maskUnits="userSpaceOnUse" x="-5" y="-5" width="50" height="45"><rect x="-5" y="-5" width="50" height="45" fill="#fff"/><path d="M0.3 1.6L15.2 9.8L30.7 0.2" stroke="#000" stroke-width="0.9" fill="none"/><g transform="translate(32.7 15.3) rotate(47)"><path d="M-4.5 -1.2H4.5V22.8L0 25.6L-4.5 22.8Z" fill="#000"/></g></mask><g mask="url(#m15)"><path d="M0 0H31V19.0Q31 21.5 28.5 21.5H2.5Q0 21.5 0 19.0Z" fill="#0072c6"/></g><g transform="translate(32.7 15.3) rotate(47)"><rect x="-3.4" y="0" width="6.8" height="3.9" fill="#0072c6"/><rect x="-3.4" y="4.8" width="6.8" height="10.6" fill="#0072c6"/><path d="M-3.4 16.3H3.4L0 22.2Z" fill="#0072c6"/></g></g></g><path d="M5.299999999999997 72.3L46.5 87.9V118.9L5.299999999999997 103.2Z" fill="#0050a8"/><path d="M87.7 72.3L46.5 87.9V118.9L87.7 103.2Z" fill="#0090d0"/><path d="M5.299999999999997 72.3L46.5 118.9L5.299999999999997 103.2Z" fill="#0038a0" stroke="#0038a0" stroke-width=".5" stroke-linejoin="round"/><path d="M26.5 95.6L46.5 87.9V118.9Z" fill="#005cb2" stroke="#005cb2" stroke-width=".5" stroke-linejoin="round"/><path d="M5.299999999999997 72.3L46.5 87.9L26.5 95.6Z" fill="#005a94" stroke="#005a94" stroke-width=".5" stroke-linejoin="round"/><path d="M87.7 72.3V103.2L46.5 118.9Z" fill="#00a8de" stroke="#00a8de" stroke-width=".5" stroke-linejoin="round"/><path d="M46.5 87.9L66.5 95.6L46.5 118.9Z" fill="#0090d0" stroke="#0090d0" stroke-width=".5" stroke-linejoin="round"/><path d="M46.5 87.9L87.7 72.3L66.5 95.6Z" fill="#0072bb" stroke="#0072bb" stroke-width=".5" stroke-linejoin="round"/></g></svg><div class="t tc " style="left:876.5px;top:482.5px;letter-spacing:-0.197px;">frame.0012.png</div><div class="a" style="left:984px;top:351px;width:93px;height:123px;background:#e9e9e9;box-shadow:2px 2px 3px rgba(0,0,0,.3),1px 1px 0 rgba(0,0,0,.14)"></div><svg style="left:984px;top:351px;overflow:hidden" width="93" height="123" viewBox="0 0 93 123"><clipPath id="c13"><rect x="0" y="0" width="93" height="123"/></clipPath><g clip-path="url(#c13)"><rect width="93" height="123" fill="#e9e9e9"/><clipPath id="k13"><path d="M-50 -50H150V48.71L46.5 87.9L-50 51.36Z"/></clipPath><path d="M46.5 56.8L87.7 72.3V103.2L46.5 118.9L5.299999999999997 103.2V72.3Z" fill="#fff" stroke="#fff" stroke-width="4.2" stroke-linejoin="round"/><path d="M5.299999999999997 72.3L46.5 56.8L87.7 72.3L46.5 87.9Z" fill="#004879"/><path d="M5.299999999999997 72.3L46.5 56.8V64.7L15.9 76.4Z" fill="#002c4b"/><path d="M46.5 64.7L77.1 76.4L46.5 87.9L15.9 76.4Z" fill="#fff"/><g clip-path="url(#k13)"><g transform="translate(32.80 78.00) rotate(0)"><path d="M0 0H16.9L26.2 9.3V35.5H0Z M16.5 1.9L24.4 9.9H16.5ZM4.2 12.2H22.1V31.2H4.2Z" fill="#0072c6" fill-rule="evenodd"/><rect x="4.5" y="12.5" width="17.3" height="18.4" fill="none" stroke="#fff" stroke-opacity=".5" stroke-width=".6"/><path d="M5.9 13.5H10.1V16.1H5.9ZM11.8 13.5H20.2V16.1H11.8ZM5.9 18.1H10.1V20.7H5.9ZM11.8 18.1H20.2V20.7H11.8ZM5.9 22.6H10.1V25.2H5.9ZM11.8 22.6H20.2V25.2H11.8ZM5.9 27.1H10.1V29.7H5.9ZM11.8 27.1H20.2V29.7H11.8Z" fill="#0072c6"/></g><g transform="translate(44.30 38.50) rotate(15)"><path d="M0 0H16.9L26.2 9.3V35.5H0Z M16.5 1.9L24.4 9.9H16.5ZM5.8 10.6H13.6V12.1H5.8ZM5.8 15.0H19.4V16.5H5.8ZM4.6 19.8H8.6V21.3H4.6ZM4.6 23.8H8.6V25.3H4.6ZM4.6 27.8H8.6V29.3H4.6ZM10.6 19.2H20.8V30.6H10.6Z" fill="#0072c6" fill-rule="evenodd"/><rect x="10.9" y="19.5" width="9.6" height="10.8" fill="none" stroke="#fff" stroke-opacity=".55" stroke-width=".6"/><path d="M12 28.8L16.2 23.4L19.2 27.2V28.8Z" fill="#0072c6"/><circle cx="14" cy="22.2" r="0.9" fill="#0072c6"/></g><g transform="translate(0.76 22.50) rotate(-15)"><mask id="m16" maskUnits="userSpaceOnUse" x="-5" y="-5" width="50" height="45"><rect x="-5" y="-5" width="50" height="45" fill="#fff"/><path d="M0.3 1.6L15.2 9.8L30.7 0.2" stroke="#000" stroke-width="0.9" fill="none"/><g transform="translate(32.7 15.3) rotate(47)"><path d="M-4.5 -1.2H4.5V22.8L0 25.6L-4.5 22.8Z" fill="#000"/></g></mask><g mask="url(#m16)"><path d="M0 0H31V19.0Q31 21.5 28.5 21.5H2.5Q0 21.5 0 19.0Z" fill="#0072c6"/></g><g transform="translate(32.7 15.3) rotate(47)"><rect x="-3.4" y="0" width="6.8" height="3.9" fill="#0072c6"/><rect x="-3.4" y="4.8" width="6.8" height="10.6" fill="#0072c6"/><path d="M-3.4 16.3H3.4L0 22.2Z" fill="#0072c6"/></g></g></g><path d="M5.299999999999997 72.3L46.5 87.9V118.9L5.299999999999997 103.2Z" fill="#0050a8"/><path d="M87.7 72.3L46.5 87.9V118.9L87.7 103.2Z" fill="#0090d0"/><path d="M5.299999999999997 72.3L46.5 118.9L5.299999999999997 103.2Z" fill="#0038a0" stroke="#0038a0" stroke-width=".5" stroke-linejoin="round"/><path d="M26.5 95.6L46.5 87.9V118.9Z" fill="#005cb2" stroke="#005cb2" stroke-width=".5" stroke-linejoin="round"/><path d="M5.299999999999997 72.3L46.5 87.9L26.5 95.6Z" fill="#005a94" stroke="#005a94" stroke-width=".5" stroke-linejoin="round"/><path d="M87.7 72.3V103.2L46.5 118.9Z" fill="#00a8de" stroke="#00a8de" stroke-width=".5" stroke-linejoin="round"/><path d="M46.5 87.9L66.5 95.6L46.5 118.9Z" fill="#0090d0" stroke="#0090d0" stroke-width=".5" stroke-linejoin="round"/><path d="M46.5 87.9L87.7 72.3L66.5 95.6Z" fill="#0072bb" stroke="#0072bb" stroke-width=".5" stroke-linejoin="round"/></g></svg><div class="t tc " style="left:1033.5px;top:482.5px;letter-spacing:-0.197px;">frame.0013.png</div><div class="a" style="left:1141px;top:351px;width:93px;height:123px;background:#e9e9e9;box-shadow:2px 2px 3px rgba(0,0,0,.3),1px 1px 0 rgba(0,0,0,.14)"></div><svg style="left:1141px;top:351px;overflow:hidden" width="93" height="123" viewBox="0 0 93 123"><clipPath id="c14"><rect x="0" y="0" width="93" height="123"/></clipPath><g clip-path="url(#c14)"><rect width="93" height="123" fill="#e9e9e9"/><clipPath id="k14"><path d="M-50 -50H150V48.71L46.5 87.9L-50 51.36Z"/></clipPath><path d="M46.5 56.8L87.7 72.3V103.2L46.5 118.9L5.299999999999997 103.2V72.3Z" fill="#fff" stroke="#fff" stroke-width="4.2" stroke-linejoin="round"/><path d="M5.299999999999997 72.3L46.5 56.8L87.7 72.3L46.5 87.9Z" fill="#004879"/><path d="M5.299999999999997 72.3L46.5 56.8V64.7L15.9 76.4Z" fill="#002c4b"/><path d="M46.5 64.7L77.1 76.4L46.5 87.9L15.9 76.4Z" fill="#fff"/><g clip-path="url(#k14)"><g transform="translate(39.70 52.60) rotate(15)"><path d="M0 0H16.9L26.2 9.3V35.5H0Z M16.5 1.9L24.4 9.9H16.5ZM5.8 10.6H13.6V12.1H5.8ZM5.8 15.0H19.4V16.5H5.8ZM4.6 19.8H8.6V21.3H4.6ZM4.6 23.8H8.6V25.3H4.6ZM4.6 27.8H8.6V29.3H4.6ZM10.6 19.2H20.8V30.6H10.6Z" fill="#0072c6" fill-rule="evenodd"/><rect x="10.9" y="19.5" width="9.6" height="10.8" fill="none" stroke="#fff" stroke-opacity=".55" stroke-width=".6"/><path d="M12 28.8L16.2 23.4L19.2 27.2V28.8Z" fill="#0072c6"/><circle cx="14" cy="22.2" r="0.9" fill="#0072c6"/></g><g transform="translate(4.90 32.40) rotate(-15)"><mask id="m17" maskUnits="userSpaceOnUse" x="-5" y="-5" width="50" height="45"><rect x="-5" y="-5" width="50" height="45" fill="#fff"/><path d="M0.3 1.6L15.2 9.8L30.7 0.2" stroke="#000" stroke-width="0.9" fill="none"/><g transform="translate(32.7 15.3) rotate(47)"><path d="M-4.5 -1.2H4.5V22.8L0 25.6L-4.5 22.8Z" fill="#000"/></g></mask><g mask="url(#m17)"><path d="M0 0H31V19.0Q31 21.5 28.5 21.5H2.5Q0 21.5 0 19.0Z" fill="#0072c6"/></g><g transform="translate(32.7 15.3) rotate(47)"><rect x="-3.4" y="0" width="6.8" height="3.9" fill="#0072c6"/><rect x="-3.4" y="4.8" width="6.8" height="10.6" fill="#0072c6"/><path d="M-3.4 16.3H3.4L0 22.2Z" fill="#0072c6"/></g></g></g><path d="M5.299999999999997 72.3L46.5 87.9V118.9L5.299999999999997 103.2Z" fill="#0050a8"/><path d="M87.7 72.3L46.5 87.9V118.9L87.7 103.2Z" fill="#0090d0"/><path d="M5.299999999999997 72.3L46.5 118.9L5.299999999999997 103.2Z" fill="#0038a0" stroke="#0038a0" stroke-width=".5" stroke-linejoin="round"/><path d="M26.5 95.6L46.5 87.9V118.9Z" fill="#005cb2" stroke="#005cb2" stroke-width=".5" stroke-linejoin="round"/><path d="M5.299999999999997 72.3L46.5 87.9L26.5 95.6Z" fill="#005a94" stroke="#005a94" stroke-width=".5" stroke-linejoin="round"/><path d="M87.7 72.3V103.2L46.5 118.9Z" fill="#00a8de" stroke="#00a8de" stroke-width=".5" stroke-linejoin="round"/><path d="M46.5 87.9L66.5 95.6L46.5 118.9Z" fill="#0090d0" stroke="#0090d0" stroke-width=".5" stroke-linejoin="round"/><path d="M46.5 87.9L87.7 72.3L66.5 95.6Z" fill="#0072bb" stroke="#0072bb" stroke-width=".5" stroke-linejoin="round"/></g></svg><div class="t tc " style="left:1190.5px;top:482.5px;letter-spacing:-0.197px;">frame.0014.png</div><div class="a" style="left:199px;top:508px;width:93px;height:123px;background:#e9e9e9;box-shadow:2px 2px 3px rgba(0,0,0,.3),1px 1px 0 rgba(0,0,0,.14)"></div><svg style="left:199px;top:508px;overflow:hidden" width="93" height="123" viewBox="0 0 93 123"><clipPath id="c15"><rect x="0" y="0" width="93" height="123"/></clipPath><g clip-path="url(#c15)"><rect width="93" height="123" fill="#e9e9e9"/><clipPath id="k15"><path d="M-50 -50H150V48.71L46.5 87.9L-50 51.36Z"/></clipPath><path d="M46.5 56.8L87.7 72.3V103.2L46.5 118.9L5.299999999999997 103.2V72.3Z" fill="#fff" stroke="#fff" stroke-width="4.2" stroke-linejoin="round"/><path d="M5.299999999999997 72.3L46.5 56.8L87.7 72.3L46.5 87.9Z" fill="#004879"/><path d="M5.299999999999997 72.3L46.5 56.8V64.7L15.9 76.4Z" fill="#002c4b"/><path d="M46.5 64.7L77.1 76.4L46.5 87.9L15.9 76.4Z" fill="#fff"/><g clip-path="url(#k15)"><g transform="translate(35.80 66.70) rotate(15)"><path d="M0 0H16.9L26.2 9.3V35.5H0Z M16.5 1.9L24.4 9.9H16.5ZM5.8 10.6H13.6V12.1H5.8ZM5.8 15.0H19.4V16.5H5.8ZM4.6 19.8H8.6V21.3H4.6ZM4.6 23.8H8.6V25.3H4.6ZM4.6 27.8H8.6V29.3H4.6ZM10.6 19.2H20.8V30.6H10.6Z" fill="#0072c6" fill-rule="evenodd"/><rect x="10.9" y="19.5" width="9.6" height="10.8" fill="none" stroke="#fff" stroke-opacity=".55" stroke-width=".6"/><path d="M12 28.8L16.2 23.4L19.2 27.2V28.8Z" fill="#0072c6"/><circle cx="14" cy="22.2" r="0.9" fill="#0072c6"/></g><g transform="translate(9.20 43.40) rotate(-15)"><mask id="m18" maskUnits="userSpaceOnUse" x="-5" y="-5" width="50" height="45"><rect x="-5" y="-5" width="50" height="45" fill="#fff"/><path d="M0.3 1.6L15.2 9.8L30.7 0.2" stroke="#000" stroke-width="0.9" fill="none"/><g transform="translate(32.7 15.3) rotate(47)"><path d="M-4.5 -1.2H4.5V22.8L0 25.6L-4.5 22.8Z" fill="#000"/></g></mask><g mask="url(#m18)"><path d="M0 0H31V19.0Q31 21.5 28.5 21.5H2.5Q0 21.5 0 19.0Z" fill="#0072c6"/></g><g transform="translate(32.7 15.3) rotate(47)"><rect x="-3.4" y="0" width="6.8" height="3.9" fill="#0072c6"/><rect x="-3.4" y="4.8" width="6.8" height="10.6" fill="#0072c6"/><path d="M-3.4 16.3H3.4L0 22.2Z" fill="#0072c6"/></g></g></g><path d="M5.299999999999997 72.3L46.5 87.9V118.9L5.299999999999997 103.2Z" fill="#0050a8"/><path d="M87.7 72.3L46.5 87.9V118.9L87.7 103.2Z" fill="#0090d0"/><path d="M5.299999999999997 72.3L46.5 118.9L5.299999999999997 103.2Z" fill="#0038a0" stroke="#0038a0" stroke-width=".5" stroke-linejoin="round"/><path d="M26.5 95.6L46.5 87.9V118.9Z" fill="#005cb2" stroke="#005cb2" stroke-width=".5" stroke-linejoin="round"/><path d="M5.299999999999997 72.3L46.5 87.9L26.5 95.6Z" fill="#005a94" stroke="#005a94" stroke-width=".5" stroke-linejoin="round"/><path d="M87.7 72.3V103.2L46.5 118.9Z" fill="#00a8de" stroke="#00a8de" stroke-width=".5" stroke-linejoin="round"/><path d="M46.5 87.9L66.5 95.6L46.5 118.9Z" fill="#0090d0" stroke="#0090d0" stroke-width=".5" stroke-linejoin="round"/><path d="M46.5 87.9L87.7 72.3L66.5 95.6Z" fill="#0072bb" stroke="#0072bb" stroke-width=".5" stroke-linejoin="round"/></g></svg><div class="t tc " style="left:248.5px;top:639.5px;letter-spacing:-0.197px;">frame.0015.png</div><div class="a" style="left:356px;top:508px;width:93px;height:123px;background:#e9e9e9;box-shadow:2px 2px 3px rgba(0,0,0,.3),1px 1px 0 rgba(0,0,0,.14)"></div><svg style="left:356px;top:508px;overflow:hidden" width="93" height="123" viewBox="0 0 93 123"><clipPath id="c16"><rect x="0" y="0" width="93" height="123"/></clipPath><g clip-path="url(#c16)"><rect width="93" height="123" fill="#e9e9e9"/><clipPath id="k16"><path d="M-50 -50H150V48.71L46.5 87.9L-50 51.36Z"/></clipPath><path d="M46.5 56.8L87.7 72.3V103.2L46.5 118.9L5.299999999999997 103.2V72.3Z" fill="#fff" stroke="#fff" stroke-width="4.2" stroke-linejoin="round"/><path d="M5.299999999999997 72.3L46.5 56.8L87.7 72.3L46.5 87.9Z" fill="#004879"/><path d="M5.299999999999997 72.3L46.5 56.8V64.7L15.9 76.4Z" fill="#002c4b"/><path d="M46.5 64.7L77.1 76.4L46.5 87.9L15.9 76.4Z" fill="#fff"/><g clip-path="url(#k16)"><g transform="translate(32.00 79.80) rotate(15)"><path d="M0 0H16.9L26.2 9.3V35.5H0Z M16.5 1.9L24.4 9.9H16.5ZM5.8 10.6H13.6V12.1H5.8ZM5.8 15.0H19.4V16.5H5.8ZM4.6 19.8H8.6V21.3H4.6ZM4.6 23.8H8.6V25.3H4.6ZM4.6 27.8H8.6V29.3H4.6ZM10.6 19.2H20.8V30.6H10.6Z" fill="#0072c6" fill-rule="evenodd"/><rect x="10.9" y="19.5" width="9.6" height="10.8" fill="none" stroke="#fff" stroke-opacity=".55" stroke-width=".6"/><path d="M12 28.8L16.2 23.4L19.2 27.2V28.8Z" fill="#0072c6"/><circle cx="14" cy="22.2" r="0.9" fill="#0072c6"/></g><g transform="translate(13.75 54.50) rotate(-15)"><mask id="m19" maskUnits="userSpaceOnUse" x="-5" y="-5" width="50" height="45"><rect x="-5" y="-5" width="50" height="45" fill="#fff"/><path d="M0.3 1.6L15.2 9.8L30.7 0.2" stroke="#000" stroke-width="0.9" fill="none"/><g transform="translate(32.7 15.3) rotate(47)"><path d="M-4.5 -1.2H4.5V22.8L0 25.6L-4.5 22.8Z" fill="#000"/></g></mask><g mask="url(#m19)"><path d="M0 0H31V19.0Q31 21.5 28.5 21.5H2.5Q0 21.5 0 19.0Z" fill="#0072c6"/></g><g transform="translate(32.7 15.3) rotate(47)"><rect x="-3.4" y="0" width="6.8" height="3.9" fill="#0072c6"/><rect x="-3.4" y="4.8" width="6.8" height="10.6" fill="#0072c6"/><path d="M-3.4 16.3H3.4L0 22.2Z" fill="#0072c6"/></g></g></g><path d="M5.299999999999997 72.3L46.5 87.9V118.9L5.299999999999997 103.2Z" fill="#0050a8"/><path d="M87.7 72.3L46.5 87.9V118.9L87.7 103.2Z" fill="#0090d0"/><path d="M5.299999999999997 72.3L46.5 118.9L5.299999999999997 103.2Z" fill="#0038a0" stroke="#0038a0" stroke-width=".5" stroke-linejoin="round"/><path d="M26.5 95.6L46.5 87.9V118.9Z" fill="#005cb2" stroke="#005cb2" stroke-width=".5" stroke-linejoin="round"/><path d="M5.299999999999997 72.3L46.5 87.9L26.5 95.6Z" fill="#005a94" stroke="#005a94" stroke-width=".5" stroke-linejoin="round"/><path d="M87.7 72.3V103.2L46.5 118.9Z" fill="#00a8de" stroke="#00a8de" stroke-width=".5" stroke-linejoin="round"/><path d="M46.5 87.9L66.5 95.6L46.5 118.9Z" fill="#0090d0" stroke="#0090d0" stroke-width=".5" stroke-linejoin="round"/><path d="M46.5 87.9L87.7 72.3L66.5 95.6Z" fill="#0072bb" stroke="#0072bb" stroke-width=".5" stroke-linejoin="round"/></g></svg><div class="t tc " style="left:405.5px;top:639.5px;letter-spacing:-0.197px;">frame.0016.png</div><div class="a" style="left:513px;top:508px;width:93px;height:123px;background:#e9e9e9;box-shadow:2px 2px 3px rgba(0,0,0,.3),1px 1px 0 rgba(0,0,0,.14)"></div><svg style="left:513px;top:508px;overflow:hidden" width="93" height="123" viewBox="0 0 93 123"><clipPath id="c17"><rect x="0" y="0" width="93" height="123"/></clipPath><g clip-path="url(#c17)"><rect width="93" height="123" fill="#e9e9e9"/><clipPath id="k17"><path d="M-50 -50H150V48.71L46.5 87.9L-50 51.36Z"/></clipPath><path d="M46.5 56.8L87.7 72.3V103.2L46.5 118.9L5.299999999999997 103.2V72.3Z" fill="#fff" stroke="#fff" stroke-width="4.2" stroke-linejoin="round"/><path d="M5.299999999999997 72.3L46.5 56.8L87.7 72.3L46.5 87.9Z" fill="#004879"/><path d="M5.299999999999997 72.3L46.5 56.8V64.7L15.9 76.4Z" fill="#002c4b"/><path d="M46.5 64.7L77.1 76.4L46.5 87.9L15.9 76.4Z" fill="#fff"/><g clip-path="url(#k17)"><g transform="translate(18.30 65.20) rotate(-15)"><mask id="m20" maskUnits="userSpaceOnUse" x="-5" y="-5" width="50" height="45"><rect x="-5" y="-5" width="50" height="45" fill="#fff"/><path d="M0.3 1.6L15.2 9.8L30.7 0.2" stroke="#000" stroke-width="0.9" fill="none"/><g transform="translate(32.7 15.3) rotate(47)"><path d="M-4.5 -1.2H4.5V22.8L0 25.6L-4.5 22.8Z" fill="#000"/></g></mask><g mask="url(#m20)"><path d="M0 0H31V19.0Q31 21.5 28.5 21.5H2.5Q0 21.5 0 19.0Z" fill="#0072c6"/></g><g transform="translate(32.7 15.3) rotate(47)"><rect x="-3.4" y="0" width="6.8" height="3.9" fill="#0072c6"/><rect x="-3.4" y="4.8" width="6.8" height="10.6" fill="#0072c6"/><path d="M-3.4 16.3H3.4L0 22.2Z" fill="#0072c6"/></g></g></g><path d="M5.299999999999997 72.3L46.5 87.9V118.9L5.299999999999997 103.2Z" fill="#0050a8"/><path d="M87.7 72.3L46.5 87.9V118.9L87.7 103.2Z" fill="#0090d0"/><path d="M5.299999999999997 72.3L46.5 118.9L5.299999999999997 103.2Z" fill="#0038a0" stroke="#0038a0" stroke-width=".5" stroke-linejoin="round"/><path d="M26.5 95.6L46.5 87.9V118.9Z" fill="#005cb2" stroke="#005cb2" stroke-width=".5" stroke-linejoin="round"/><path d="M5.299999999999997 72.3L46.5 87.9L26.5 95.6Z" fill="#005a94" stroke="#005a94" stroke-width=".5" stroke-linejoin="round"/><path d="M87.7 72.3V103.2L46.5 118.9Z" fill="#00a8de" stroke="#00a8de" stroke-width=".5" stroke-linejoin="round"/><path d="M46.5 87.9L66.5 95.6L46.5 118.9Z" fill="#0090d0" stroke="#0090d0" stroke-width=".5" stroke-linejoin="round"/><path d="M46.5 87.9L87.7 72.3L66.5 95.6Z" fill="#0072bb" stroke="#0072bb" stroke-width=".5" stroke-linejoin="round"/></g></svg><div class="t tc " style="left:562.5px;top:639.5px;letter-spacing:-0.197px;">frame.0017.png</div><div class="a" style="left:670px;top:508px;width:93px;height:123px;background:#e9e9e9;box-shadow:2px 2px 3px rgba(0,0,0,.3),1px 1px 0 rgba(0,0,0,.14)"></div><svg style="left:670px;top:508px;overflow:hidden" width="93" height="123" viewBox="0 0 93 123"><clipPath id="c18"><rect x="0" y="0" width="93" height="123"/></clipPath><g clip-path="url(#c18)"><rect width="93" height="123" fill="#e9e9e9"/><clipPath id="k18"><path d="M-50 -50H150V48.71L46.5 87.9L-50 51.36Z"/></clipPath><path d="M46.5 56.8L87.7 72.3V103.2L46.5 118.9L5.299999999999997 103.2V72.3Z" fill="#fff" stroke="#fff" stroke-width="4.2" stroke-linejoin="round"/><path d="M5.299999999999997 72.3L46.5 56.8L87.7 72.3L46.5 87.9Z" fill="#004879"/><path d="M5.299999999999997 72.3L46.5 56.8V64.7L15.9 76.4Z" fill="#002c4b"/><path d="M46.5 64.7L77.1 76.4L46.5 87.9L15.9 76.4Z" fill="#fff"/><g clip-path="url(#k18)"><g transform="translate(22.20 76.00) rotate(-15)"><mask id="m21" maskUnits="userSpaceOnUse" x="-5" y="-5" width="50" height="45"><rect x="-5" y="-5" width="50" height="45" fill="#fff"/><path d="M0.3 1.6L15.2 9.8L30.7 0.2" stroke="#000" stroke-width="0.9" fill="none"/><g transform="translate(32.7 15.3) rotate(47)"><path d="M-4.5 -1.2H4.5V22.8L0 25.6L-4.5 22.8Z" fill="#000"/></g></mask><g mask="url(#m21)"><path d="M0 0H31V19.0Q31 21.5 28.5 21.5H2.5Q0 21.5 0 19.0Z" fill="#0072c6"/></g><g transform="translate(32.7 15.3) rotate(47)"><rect x="-3.4" y="0" width="6.8" height="3.9" fill="#0072c6"/><rect x="-3.4" y="4.8" width="6.8" height="10.6" fill="#0072c6"/><path d="M-3.4 16.3H3.4L0 22.2Z" fill="#0072c6"/></g></g></g><path d="M5.299999999999997 72.3L46.5 87.9V118.9L5.299999999999997 103.2Z" fill="#0050a8"/><path d="M87.7 72.3L46.5 87.9V118.9L87.7 103.2Z" fill="#0090d0"/><path d="M5.299999999999997 72.3L46.5 118.9L5.299999999999997 103.2Z" fill="#0038a0" stroke="#0038a0" stroke-width=".5" stroke-linejoin="round"/><path d="M26.5 95.6L46.5 87.9V118.9Z" fill="#005cb2" stroke="#005cb2" stroke-width=".5" stroke-linejoin="round"/><path d="M5.299999999999997 72.3L46.5 87.9L26.5 95.6Z" fill="#005a94" stroke="#005a94" stroke-width=".5" stroke-linejoin="round"/><path d="M87.7 72.3V103.2L46.5 118.9Z" fill="#00a8de" stroke="#00a8de" stroke-width=".5" stroke-linejoin="round"/><path d="M46.5 87.9L66.5 95.6L46.5 118.9Z" fill="#0090d0" stroke="#0090d0" stroke-width=".5" stroke-linejoin="round"/><path d="M46.5 87.9L87.7 72.3L66.5 95.6Z" fill="#0072bb" stroke="#0072bb" stroke-width=".5" stroke-linejoin="round"/></g></svg><div class="t tc " style="left:719.5px;top:639.5px;letter-spacing:-0.197px;">frame.0018.png</div><div class="a" style="left:827px;top:508px;width:93px;height:123px;background:#e9e9e9;box-shadow:2px 2px 3px rgba(0,0,0,.3),1px 1px 0 rgba(0,0,0,.14)"></div><svg style="left:827px;top:508px;overflow:hidden" width="93" height="123" viewBox="0 0 93 123"><clipPath id="c19"><rect x="0" y="0" width="93" height="123"/></clipPath><g clip-path="url(#c19)"><rect width="93" height="123" fill="#e9e9e9"/><clipPath id="k19"><path d="M-50 -50H150V48.71L46.5 87.9L-50 51.36Z"/></clipPath><path d="M46.5 56.8L87.7 72.3V103.2L46.5 118.9L5.299999999999997 103.2V72.3Z" fill="#fff" stroke="#fff" stroke-width="4.2" stroke-linejoin="round"/><path d="M5.299999999999997 72.3L46.5 56.8L87.7 72.3L46.5 87.9Z" fill="#004879"/><path d="M5.299999999999997 72.3L46.5 56.8V64.7L15.9 76.4Z" fill="#002c4b"/><path d="M46.5 64.7L77.1 76.4L46.5 87.9L15.9 76.4Z" fill="#fff"/><g clip-path="url(#k19)"><g transform="translate(26.30 85.90) rotate(-15)"><mask id="m22" maskUnits="userSpaceOnUse" x="-5" y="-5" width="50" height="45"><rect x="-5" y="-5" width="50" height="45" fill="#fff"/><path d="M0.3 1.6L15.2 9.8L30.7 0.2" stroke="#000" stroke-width="0.9" fill="none"/><g transform="translate(32.7 15.3) rotate(47)"><path d="M-4.5 -1.2H4.5V22.8L0 25.6L-4.5 22.8Z" fill="#000"/></g></mask><g mask="url(#m22)"><path d="M0 0H31V19.0Q31 21.5 28.5 21.5H2.5Q0 21.5 0 19.0Z" fill="#0072c6"/></g><g transform="translate(32.7 15.3) rotate(47)"><rect x="-3.4" y="0" width="6.8" height="3.9" fill="#0072c6"/><rect x="-3.4" y="4.8" width="6.8" height="10.6" fill="#0072c6"/><path d="M-3.4 16.3H3.4L0 22.2Z" fill="#0072c6"/></g></g></g><path d="M5.299999999999997 72.3L46.5 87.9V118.9L5.299999999999997 103.2Z" fill="#0050a8"/><path d="M87.7 72.3L46.5 87.9V118.9L87.7 103.2Z" fill="#0090d0"/><path d="M5.299999999999997 72.3L46.5 118.9L5.299999999999997 103.2Z" fill="#0038a0" stroke="#0038a0" stroke-width=".5" stroke-linejoin="round"/><path d="M26.5 95.6L46.5 87.9V118.9Z" fill="#005cb2" stroke="#005cb2" stroke-width=".5" stroke-linejoin="round"/><path d="M5.299999999999997 72.3L46.5 87.9L26.5 95.6Z" fill="#005a94" stroke="#005a94" stroke-width=".5" stroke-linejoin="round"/><path d="M87.7 72.3V103.2L46.5 118.9Z" fill="#00a8de" stroke="#00a8de" stroke-width=".5" stroke-linejoin="round"/><path d="M46.5 87.9L66.5 95.6L46.5 118.9Z" fill="#0090d0" stroke="#0090d0" stroke-width=".5" stroke-linejoin="round"/><path d="M46.5 87.9L87.7 72.3L66.5 95.6Z" fill="#0072bb" stroke="#0072bb" stroke-width=".5" stroke-linejoin="round"/></g></svg><div class="t tc " style="left:876.5px;top:639.5px;letter-spacing:-0.197px;">frame.0019.png</div><div class="a" style="left:984px;top:508px;width:93px;height:123px;background:#e9e9e9;box-shadow:2px 2px 3px rgba(0,0,0,.3),1px 1px 0 rgba(0,0,0,.14)"></div><svg style="left:984px;top:508px;overflow:hidden" width="93" height="123" viewBox="0 0 93 123"><clipPath id="c20"><rect x="0" y="0" width="93" height="123"/></clipPath><g clip-path="url(#c20)"><rect width="93" height="123" fill="#e9e9e9"/><clipPath id="k20"><path d="M-50 -50H150V48.71L46.5 87.9L-50 51.36Z"/></clipPath><path d="M46.5 56.8L87.7 72.3V103.2L46.5 118.9L5.299999999999997 103.2V72.3Z" fill="#fff" stroke="#fff" stroke-width="4.2" stroke-linejoin="round"/><path d="M5.299999999999997 72.3L46.5 56.8L87.7 72.3L46.5 87.9Z" fill="#004879"/><path d="M5.299999999999997 72.3L46.5 56.8V64.7L15.9 76.4Z" fill="#002c4b"/><path d="M46.5 64.7L77.1 76.4L46.5 87.9L15.9 76.4Z" fill="#fff"/><g clip-path="url(#k20)"></g><path d="M5.299999999999997 72.3L46.5 87.9V118.9L5.299999999999997 103.2Z" fill="#0050a8"/><path d="M87.7 72.3L46.5 87.9V118.9L87.7 103.2Z" fill="#0090d0"/><path d="M5.299999999999997 72.3L46.5 118.9L5.299999999999997 103.2Z" fill="#0038a0" stroke="#0038a0" stroke-width=".5" stroke-linejoin="round"/><path d="M26.5 95.6L46.5 87.9V118.9Z" fill="#005cb2" stroke="#005cb2" stroke-width=".5" stroke-linejoin="round"/><path d="M5.299999999999997 72.3L46.5 87.9L26.5 95.6Z" fill="#005a94" stroke="#005a94" stroke-width=".5" stroke-linejoin="round"/><path d="M87.7 72.3V103.2L46.5 118.9Z" fill="#00a8de" stroke="#00a8de" stroke-width=".5" stroke-linejoin="round"/><path d="M46.5 87.9L66.5 95.6L46.5 118.9Z" fill="#0090d0" stroke="#0090d0" stroke-width=".5" stroke-linejoin="round"/><path d="M46.5 87.9L87.7 72.3L66.5 95.6Z" fill="#0072bb" stroke="#0072bb" stroke-width=".5" stroke-linejoin="round"/></g></svg><div class="t tc " style="left:1033.5px;top:639.5px;letter-spacing:-0.197px;">frame.0020.png</div>
<div class="t " style="left:15px;top:699.5px;letter-spacing:-0.158px;">20 items</div><div class="a" style="left:69px;top:702px;width:1px;height:12px;background:#ededed;"></div><svg style="left:1234px;top:700px" width="16" height="14" viewBox="0 0 16 14"><rect x="0.5" y="0.5" width="3.4" height="3.4" fill="#fff" stroke="#8e8e8e" stroke-width="0.8"/><rect x="1.7" y="1.7" width="1" height="1" fill="#4a7fc0"/><rect x="6" y="1.6" width="4" height="1" fill="#666"/><rect x="11.5" y="1.6" width="4" height="1" fill="#666"/><rect x="0.5" y="4.8" width="3.4" height="3.4" fill="#fff" stroke="#8e8e8e" stroke-width="0.8"/><rect x="1.7" y="6.0" width="1" height="1" fill="#4a7fc0"/><rect x="6" y="5.9" width="4" height="1" fill="#666"/><rect x="11.5" y="5.9" width="4" height="1" fill="#666"/><rect x="0.5" y="9.1" width="3.4" height="3.4" fill="#fff" stroke="#8e8e8e" stroke-width="0.8"/><rect x="1.7" y="10.299999999999999" width="1" height="1" fill="#d0402a"/><rect x="6" y="10.2" width="4" height="1" fill="#666"/><rect x="11.5" y="10.2" width="4" height="1" fill="#666"/></svg><svg style="left:1257px;top:701px" width="14" height="11" viewBox="0 0 14 11"><rect x="0.5" y="0.5" width="13" height="10" fill="#fff" stroke="#8e8e8e"/><rect x="2" y="2" width="10" height="3.5" fill="#5a9bdc"/><rect x="2" y="5.5" width="10" height="3.5" fill="#2d6a4a"/></svg>
<div class="a" style="left:0px;top:31px;width:1px;height:689px;background:#1883d7;"></div>
<div class="a" style="left:1279px;top:31px;width:1px;height:689px;background:#1883d7;"></div>
<div class="a" style="left:0px;top:719px;width:1280px;height:1px;background:#1883d7;"></div>
</body></html>
